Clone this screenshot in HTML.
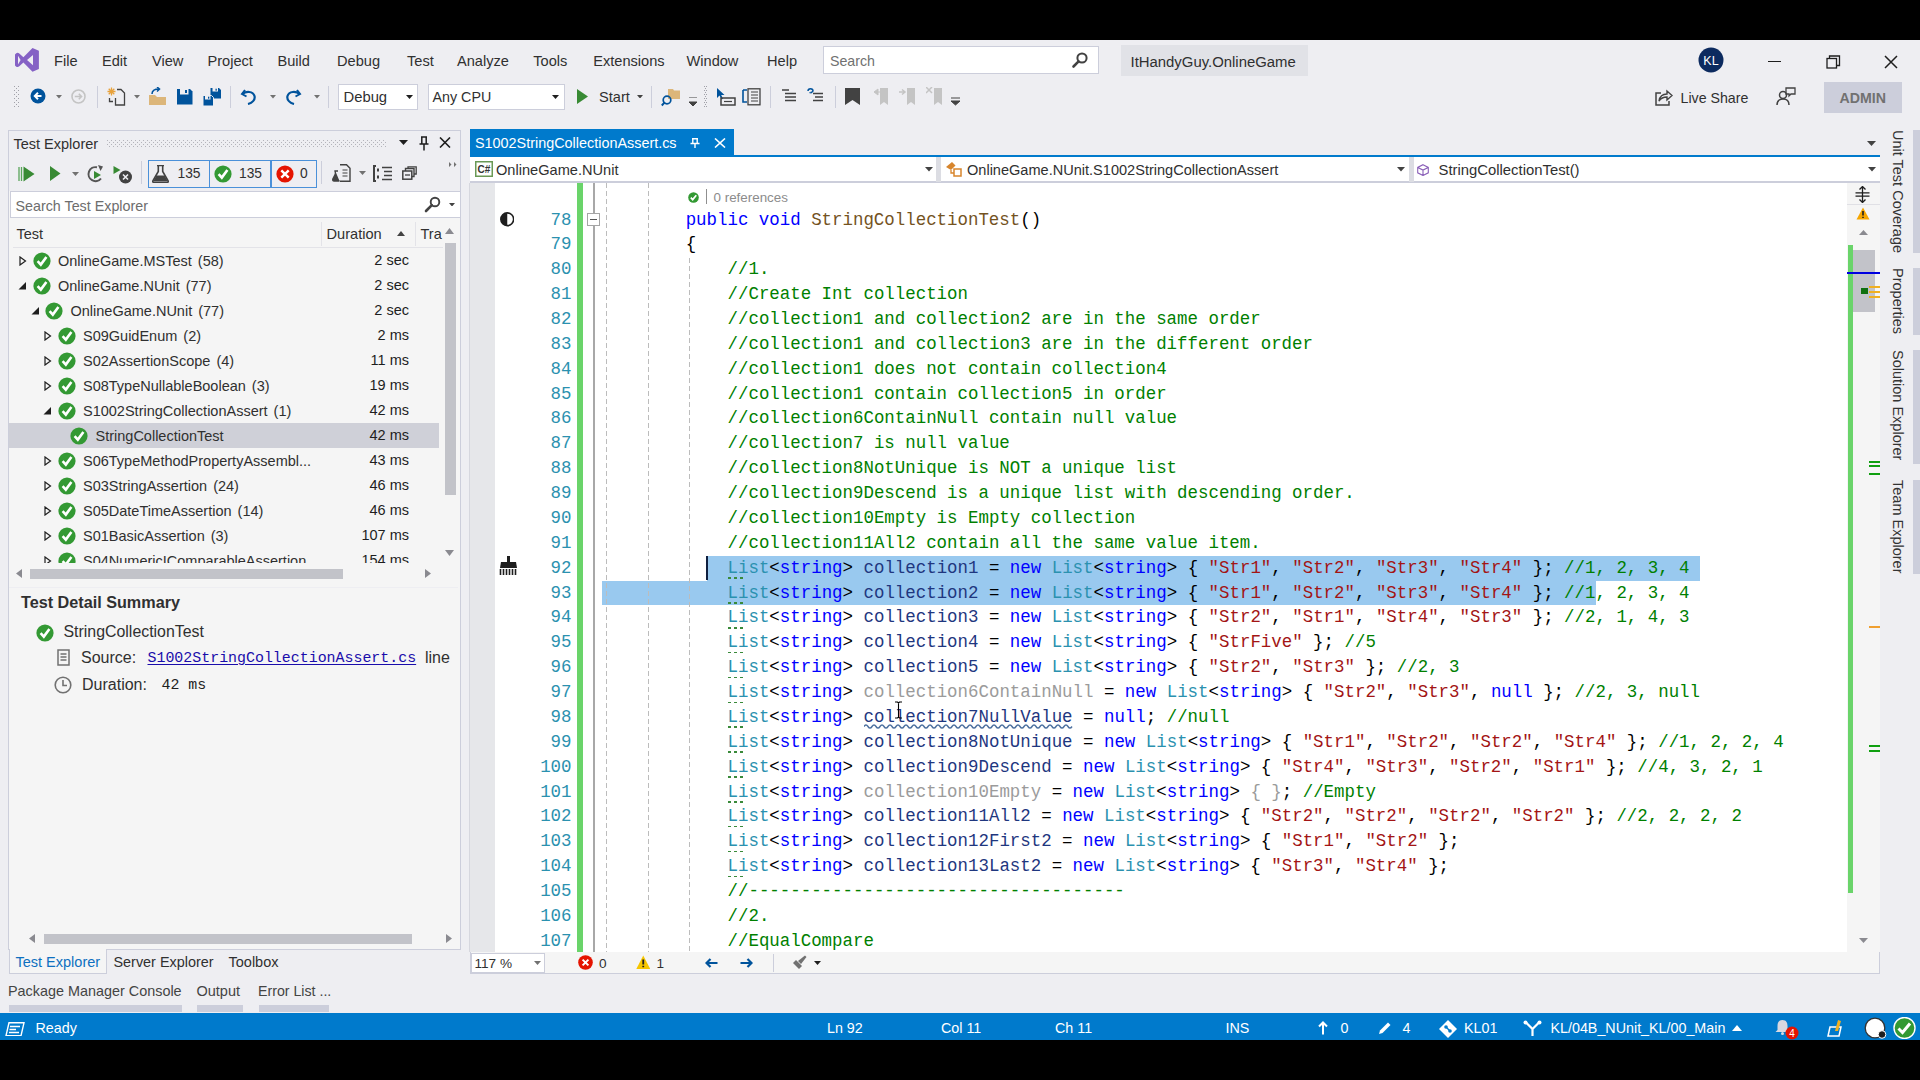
<!DOCTYPE html><html><head><meta charset="utf-8"><style>
html,body{margin:0;padding:0}
body{width:1920px;height:1080px;background:#000;overflow:hidden;position:relative;font-family:"Liberation Sans",sans-serif}
.a{position:absolute}
.t{position:absolute;white-space:nowrap;line-height:1}
.code{position:absolute;white-space:pre;font-family:"Liberation Mono",monospace;font-size:17.43px;line-height:24.87px;height:24.87px}
.k{color:#0000ff}.ty{color:#2b91af}.s{color:#a31515}.c{color:#008000}.v{color:#1f377f}.m{color:#74531f}.p{color:#000}.u{color:#9b9b9b}
</style></head><body>
<div class="a" style="left:0.00px;top:40.00px;width:1920.00px;height:1000.00px;background:#eeeef2;"></div>
<svg class="a" style="left:15.00px;top:48.00px;" width="24" height="24" viewBox="0 0 24 24"><path d="M17.5 0 L23.9 2.8 V20.9 L17.5 23.8 L8.4 14.6 L4.3 18.3 Q2.6 19.6 1 18.4 L0 17.4 V6.4 L1 5.4 Q2.6 4.2 4.3 5.5 L8.4 9.3 Z M18 7.1 V17.2 L12 12.1 Z M3 7.7 V16.4 L5.6 12 Z" fill="#8561c5" fill-rule="evenodd"/></svg>
<div class="t" style="left:54.00px;top:54.09px;font-size:14.60px;color:#303030;font-weight:normal;">File</div>
<div class="t" style="left:102.00px;top:54.09px;font-size:14.60px;color:#303030;font-weight:normal;">Edit</div>
<div class="t" style="left:152.00px;top:54.09px;font-size:14.60px;color:#303030;font-weight:normal;">View</div>
<div class="t" style="left:207.50px;top:54.09px;font-size:14.60px;color:#303030;font-weight:normal;">Project</div>
<div class="t" style="left:277.50px;top:54.09px;font-size:14.60px;color:#303030;font-weight:normal;">Build</div>
<div class="t" style="left:337.00px;top:54.09px;font-size:14.60px;color:#303030;font-weight:normal;">Debug</div>
<div class="t" style="left:407.00px;top:54.09px;font-size:14.60px;color:#303030;font-weight:normal;">Test</div>
<div class="t" style="left:457.00px;top:54.09px;font-size:14.60px;color:#303030;font-weight:normal;">Analyze</div>
<div class="t" style="left:533.25px;top:54.09px;font-size:14.60px;color:#303030;font-weight:normal;">Tools</div>
<div class="t" style="left:593.25px;top:54.09px;font-size:14.60px;color:#303030;font-weight:normal;">Extensions</div>
<div class="t" style="left:686.50px;top:54.09px;font-size:14.60px;color:#303030;font-weight:normal;">Window</div>
<div class="t" style="left:767.00px;top:54.09px;font-size:14.60px;color:#303030;font-weight:normal;">Help</div>
<div class="a" style="left:823.00px;top:46.00px;width:276.00px;height:28.00px;background:#ffffff;box-sizing:border-box;border:1px solid #cccedb"></div>
<div class="t" style="left:830.00px;top:54.15px;font-size:14.20px;color:#717171;font-weight:normal;">Search</div>
<svg class="a" style="left:1071.00px;top:51.00px;" width="18" height="18" viewBox="0 0 18 18"><circle cx="11" cy="7" r="4.6" fill="none" stroke="#424242" stroke-width="2"/><path d="M7.6 10.4 L2.5 15.5" stroke="#424242" stroke-width="2.6" stroke-linecap="round"/></svg>
<div class="a" style="left:1121.00px;top:45.00px;width:187.00px;height:31.00px;background:#e1e2e7;"></div>
<div class="t" style="left:1130.50px;top:55.04px;font-size:14.90px;color:#303030;font-weight:normal;">ItHandyGuy.OnlineGame</div>
<svg class="a" style="left:1698.00px;top:47.00px;" width="26" height="26" viewBox="0 0 26 26"><circle cx="13" cy="13" r="12.5" fill="#0c2a5f"/><text x="13" y="17.6" font-family="Liberation Sans" font-size="12.5" fill="#fff" text-anchor="middle">KL</text></svg>
<div class="a" style="left:1768.00px;top:60.50px;width:13.00px;height:1.10px;background:#1e1e1e;"></div>
<svg class="a" style="left:1826.00px;top:55.00px;" width="15" height="15" viewBox="0 0 15 15"><rect x="1" y="3.5" width="9.5" height="9.5" fill="none" stroke="#1e1e1e" stroke-width="1.3"/><path d="M3.5 3.5 V1 H13.5 V10.5 H10.5" fill="none" stroke="#1e1e1e" stroke-width="1.3"/></svg>
<svg class="a" style="left:1884.00px;top:55.00px;" width="14" height="14" viewBox="0 0 14 14"><path d="M1 1 L13 13 M13 1 L1 13" stroke="#1e1e1e" stroke-width="1.5"/></svg>
<svg class="a" style="left:13.00px;top:86.00px;" width="8" height="22" viewBox="0 0 8 22"><rect x="1" y="0" width="1" height="1" fill="#a0a0a8"/><rect x="5" y="0" width="1" height="1" fill="#a0a0a8"/><rect x="3" y="2" width="1" height="1" fill="#a0a0a8"/><rect x="1" y="4" width="1" height="1" fill="#a0a0a8"/><rect x="5" y="4" width="1" height="1" fill="#a0a0a8"/><rect x="3" y="6" width="1" height="1" fill="#a0a0a8"/><rect x="1" y="8" width="1" height="1" fill="#a0a0a8"/><rect x="5" y="8" width="1" height="1" fill="#a0a0a8"/><rect x="3" y="10" width="1" height="1" fill="#a0a0a8"/><rect x="1" y="12" width="1" height="1" fill="#a0a0a8"/><rect x="5" y="12" width="1" height="1" fill="#a0a0a8"/><rect x="3" y="14" width="1" height="1" fill="#a0a0a8"/><rect x="1" y="16" width="1" height="1" fill="#a0a0a8"/><rect x="5" y="16" width="1" height="1" fill="#a0a0a8"/><rect x="3" y="18" width="1" height="1" fill="#a0a0a8"/><rect x="1" y="20" width="1" height="1" fill="#a0a0a8"/><rect x="5" y="20" width="1" height="1" fill="#a0a0a8"/></svg>
<svg class="a" style="left:30.00px;top:88.00px;" width="16" height="16" viewBox="0 0 16 16"><circle cx="8" cy="8" r="7.5" fill="#00539c"/><path d="M11.5 8 H5 M8 4.8 L4.8 8 L8 11.2" stroke="#fff" stroke-width="2" fill="none"/></svg>
<svg class="a" style="left:55.50px;top:95.25px;" width="6" height="3.5" viewBox="0 0 6 3.5"><path d="M0 0H6 L3.0 3.5 Z" fill="#717171"/></svg>
<svg class="a" style="left:71.00px;top:89.00px;" width="15" height="15" viewBox="0 0 15 15"><circle cx="7.5" cy="7.5" r="6.5" fill="none" stroke="#c4c4c4" stroke-width="1.6"/><path d="M3.8 7.5 H10.5 M7.8 4.8 L10.5 7.5 L7.8 10.2" stroke="#c4c4c4" stroke-width="1.6" fill="none"/></svg>
<div class="a" style="left:97.00px;top:86.00px;width:1.00px;height:22.00px;background:#cccedb;"></div>
<svg class="a" style="left:107.00px;top:87.00px;" width="19" height="19" viewBox="0 0 19 19"><path d="M4.5 0.5 V8.5 M0.5 4.5 H8.5 M1.7 1.7 L7.3 7.3 M7.3 1.7 L1.7 7.3" stroke="#e8a23c" stroke-width="1.3"/><path d="M10 2.5 H14 L17.5 6 V18 H8.5 V11" fill="none" stroke="#424242" stroke-width="1.3"/><path d="M2.5 11 V14.5 H6" stroke="#424242" stroke-width="1.3" fill="none"/></svg>
<svg class="a" style="left:134.00px;top:95.25px;" width="6" height="3.5" viewBox="0 0 6 3.5"><path d="M0 0H6 L3.0 3.5 Z" fill="#717171"/></svg>
<svg class="a" style="left:148.00px;top:87.00px;" width="19" height="19" viewBox="0 0 19 19"><path d="M1 8 H7 L9 10 H18 V18 H1 Z" fill="#dcb67a"/><path d="M4 7 C4 3 7 2 11 2 M9 0 L11.5 2 L9 4.5" stroke="#00539c" stroke-width="1.5" fill="none"/></svg>
<svg class="a" style="left:177.00px;top:88.50px;" width="16" height="16" viewBox="0 0 16 16"><path d="M0 0 H13 L15.5 2.5 V15.5 H0 Z" fill="#00539c"/><rect x="3" y="0" width="8.5" height="5.5" fill="#eeeef2"/><rect x="8" y="1" width="2" height="3" fill="#00539c"/></svg>
<svg class="a" style="left:203.00px;top:87.50px;" width="18" height="18" viewBox="0 0 18 18"><path d="M7.5 0 H16 L18 2 V10.5 H7.5 Z" fill="#00539c"/><rect x="9.5" y="0" width="5.5" height="3.5" fill="#eeeef2"/><rect x="12.5" y="0.7" width="1.3" height="2" fill="#00539c"/><path d="M0 7.5 H8.5 L10.5 9.5 V18 H0 Z" fill="#00539c" stroke="#eeeef2" stroke-width="1"/><rect x="2" y="8" width="5.5" height="3.5" fill="#eeeef2"/><rect x="5" y="8.7" width="1.3" height="2" fill="#00539c"/></svg>
<div class="a" style="left:230.00px;top:86.00px;width:1.00px;height:22.00px;background:#cccedb;"></div>
<svg class="a" style="left:240.00px;top:88.00px;" width="18" height="17" viewBox="0 0 18 17"><path d="M5 2 L2 6 L6.5 8.5" stroke="#00539c" stroke-width="2" fill="none"/><path d="M2.5 6 C6 3 13 3 14.5 8 C15.5 12 12 15 8 16" stroke="#00539c" stroke-width="2.2" fill="none"/></svg>
<svg class="a" style="left:269.50px;top:95.25px;" width="6" height="3.5" viewBox="0 0 6 3.5"><path d="M0 0H6 L3.0 3.5 Z" fill="#717171"/></svg>
<svg class="a" style="left:284.00px;top:88.00px;" width="18" height="17" viewBox="0 0 18 17"><path d="M13 2 L16 6 L11.5 8.5" stroke="#00539c" stroke-width="2" fill="none"/><path d="M15.5 6 C12 3 5 3 3.5 8 C2.5 12 6 15 10 16" stroke="#00539c" stroke-width="2.2" fill="none"/></svg>
<svg class="a" style="left:313.50px;top:95.25px;" width="6" height="3.5" viewBox="0 0 6 3.5"><path d="M0 0H6 L3.0 3.5 Z" fill="#717171"/></svg>
<div class="a" style="left:328.00px;top:86.00px;width:1.00px;height:22.00px;background:#cccedb;"></div>
<div class="a" style="left:338.00px;top:84.00px;width:80.00px;height:26.00px;background:#ffffff;box-sizing:border-box;border:1px solid #cccedb"></div>
<div class="t" style="left:343.50px;top:90.05px;font-size:14.80px;color:#303030;font-weight:normal;">Debug</div>
<svg class="a" style="left:406.00px;top:94.50px;" width="7" height="4" viewBox="0 0 7 4"><path d="M0 0H7 L3.5 4 Z" fill="#1e1e1e"/></svg>
<div class="a" style="left:427.50px;top:84.00px;width:137.00px;height:26.00px;background:#ffffff;box-sizing:border-box;border:1px solid #cccedb"></div>
<div class="t" style="left:432.50px;top:90.13px;font-size:14.30px;color:#303030;font-weight:normal;">Any CPU</div>
<svg class="a" style="left:552.00px;top:94.50px;" width="7" height="4" viewBox="0 0 7 4"><path d="M0 0H7 L3.5 4 Z" fill="#1e1e1e"/></svg>
<svg class="a" style="left:577.00px;top:89.00px;" width="12" height="15" viewBox="0 0 12 15"><path d="M0 0 L11 7.5 L0 15 Z" fill="#388a34"/></svg>
<div class="t" style="left:599.00px;top:90.09px;font-size:14.60px;color:#303030;font-weight:normal;">Start</div>
<svg class="a" style="left:636.50px;top:94.75px;" width="6" height="3.5" viewBox="0 0 6 3.5"><path d="M0 0H6 L3.0 3.5 Z" fill="#424242"/></svg>
<div class="a" style="left:651.00px;top:86.00px;width:1.00px;height:22.00px;background:#cccedb;"></div>
<svg class="a" style="left:661.00px;top:87.00px;" width="20" height="20" viewBox="0 0 20 20"><path d="M7 2 H12 L13 3.5 H19 V12 H7 Z" fill="#dcb67a"/><circle cx="6" cy="13" r="3.8" fill="none" stroke="#00539c" stroke-width="1.7"/><path d="M3.5 15.5 L0.8 18.5" stroke="#00539c" stroke-width="1.9"/></svg>
<svg class="a" style="left:689.00px;top:97.00px;" width="8" height="10" viewBox="0 0 8 10"><path d="M0 0 H8 M0 5 H8 L4 9 Z" stroke="#424242" stroke-width="1" fill="#424242"/></svg>
<svg class="a" style="left:704.00px;top:86.00px;" width="3" height="22" viewBox="0 0 3 22"><rect x="0" y="0" width="1" height="1" fill="#a0a0a8"/><rect x="2" y="0" width="1" height="1" fill="#a0a0a8"/><rect x="1" y="2" width="1" height="1" fill="#a0a0a8"/><rect x="0" y="4" width="1" height="1" fill="#a0a0a8"/><rect x="2" y="4" width="1" height="1" fill="#a0a0a8"/><rect x="1" y="6" width="1" height="1" fill="#a0a0a8"/><rect x="0" y="8" width="1" height="1" fill="#a0a0a8"/><rect x="2" y="8" width="1" height="1" fill="#a0a0a8"/><rect x="1" y="10" width="1" height="1" fill="#a0a0a8"/><rect x="0" y="12" width="1" height="1" fill="#a0a0a8"/><rect x="2" y="12" width="1" height="1" fill="#a0a0a8"/><rect x="1" y="14" width="1" height="1" fill="#a0a0a8"/><rect x="0" y="16" width="1" height="1" fill="#a0a0a8"/><rect x="2" y="16" width="1" height="1" fill="#a0a0a8"/><rect x="1" y="18" width="1" height="1" fill="#a0a0a8"/><rect x="0" y="20" width="1" height="1" fill="#a0a0a8"/><rect x="2" y="20" width="1" height="1" fill="#a0a0a8"/></svg>
<svg class="a" style="left:716.00px;top:88.00px;" width="20" height="18" viewBox="0 0 20 18"><path d="M1 0 L1 10 L3.5 7.5 L5.5 11.5 L7 10.8 L5.2 7 L8.5 7 Z" fill="#00539c"/><rect x="5" y="10" width="14" height="7" fill="none" stroke="#424242" stroke-width="1.5"/><path d="M8 13.5 H16" stroke="#424242" stroke-width="1.2"/></svg>
<svg class="a" style="left:742.00px;top:88.00px;" width="20" height="18" viewBox="0 0 20 18"><path d="M1 2 H5 M1 2 V14 H5" stroke="#00539c" stroke-width="1.6" fill="none"/><rect x="6" y="0.8" width="12" height="16" fill="none" stroke="#424242" stroke-width="1.3"/><path d="M9 4 H16 M9 7 H16 M9 10 H16 M9 13 H16" stroke="#424242" stroke-width="1.2"/></svg>
<div class="a" style="left:770.00px;top:86.00px;width:1.00px;height:22.00px;background:#cccedb;"></div>
<svg class="a" style="left:782.00px;top:89.00px;" width="15" height="14" viewBox="0 0 15 14"><path d="M0 1 H7 M3 4.5 H14 M3 8 H14 M3 11.5 H14" stroke="#424242" stroke-width="1.6"/></svg>
<svg class="a" style="left:807.00px;top:88.00px;" width="17" height="16" viewBox="0 0 17 16"><path d="M1 3 C1 0 6 0 6 3 L4 5" stroke="#00539c" stroke-width="1.5" fill="none"/><path d="M2 5 L4 5.5 L3.5 3.5" fill="#00539c"/><path d="M6 5.5 H16 M8 9 H16 M6 12.5 H16" stroke="#424242" stroke-width="1.6"/></svg>
<div class="a" style="left:834.50px;top:86.00px;width:1.00px;height:22.00px;background:#cccedb;"></div>
<svg class="a" style="left:845.00px;top:88.00px;" width="15" height="17" viewBox="0 0 15 17"><path d="M0 0 H15 V17 L7.5 12 L0 17 Z" fill="#424242"/></svg>
<svg class="a" style="left:874.00px;top:88.00px;" width="15" height="17" viewBox="0 0 15 17"><path d="M6 0 H14 V17 L10 14 L6 17 Z" fill="#c4c4c4"/><path d="M0 4 L4 1 V7 Z M3 4 H6" fill="#c4c4c4" stroke="#c4c4c4"/></svg>
<svg class="a" style="left:899.00px;top:88.00px;" width="17" height="17" viewBox="0 0 17 17"><path d="M8 0 H16 V17 L12 14 L8 17 Z" fill="#c4c4c4"/><path d="M0 4 H5 M3 1.5 L6 4 L3 6.5" stroke="#c4c4c4" stroke-width="1.5" fill="none"/></svg>
<svg class="a" style="left:926.00px;top:87.00px;" width="17" height="18" viewBox="0 0 17 18"><path d="M8 1 H16 V18 L12 15 L8 18 Z" fill="#c4c4c4"/><path d="M0 0 L6 6 M6 0 L0 6" stroke="#c4c4c4" stroke-width="1.5"/></svg>
<svg class="a" style="left:951.00px;top:97.00px;" width="9" height="9" viewBox="0 0 9 9"><path d="M0 1 H9 M0 4 H9 L4.5 8 Z" stroke="#424242" stroke-width="1" fill="#424242"/></svg>
<svg class="a" style="left:1654.00px;top:88.00px;" width="19" height="19" viewBox="0 0 19 19"><path d="M7 5 H2 V17 H15 V13" stroke="#424242" stroke-width="1.5" fill="none"/><path d="M5 13 C6 7 10 6 13 6 V3 L18 7.5 L13 12 V9 C10 9 7 10 5 13 Z" stroke="#424242" stroke-width="1.4" fill="none"/></svg>
<div class="t" style="left:1680.50px;top:91.15px;font-size:14.20px;color:#303030;font-weight:normal;">Live Share</div>
<svg class="a" style="left:1776.00px;top:87.00px;" width="20" height="19" viewBox="0 0 20 19"><circle cx="7" cy="8" r="3.5" fill="none" stroke="#424242" stroke-width="1.5"/><path d="M1 18 C1 13 4 12 7 12 C10 12 13 13 13 18" stroke="#424242" stroke-width="1.5" fill="none"/><path d="M10 1 H19 V7 H15 L13 9 V7 H10 Z" stroke="#424242" stroke-width="1.3" fill="none"/></svg>
<div class="a" style="left:1824.00px;top:82.00px;width:78.00px;height:31.00px;background:#cccedb;"></div>
<div class="t" style="left:1839.50px;top:91.15px;font-size:14.20px;color:#717171;font-weight:bold;">ADMIN</div>
<div class="a" style="left:8.00px;top:129.50px;width:453.00px;height:820.00px;background:#f5f5f5;box-sizing:border-box;border:1px solid #cccedb"></div>
<div class="a" style="left:9.00px;top:130.50px;width:451.00px;height:60.00px;background:#eeeef2;"></div>
<div class="t" style="left:13.50px;top:137.10px;font-size:14.50px;color:#303030;font-weight:normal;">Test Explorer</div>
<svg class="a" style="left:107.00px;top:139.50px;" width="280" height="7" viewBox="0 0 280 7"><rect x="0" y="0" width="1" height="1" fill="#b4b4bb"/><rect x="0" y="4" width="1" height="1" fill="#b4b4bb"/><rect x="2" y="2" width="1" height="1" fill="#b4b4bb"/><rect x="2" y="6" width="1" height="1" fill="#b4b4bb"/><rect x="4" y="0" width="1" height="1" fill="#b4b4bb"/><rect x="4" y="4" width="1" height="1" fill="#b4b4bb"/><rect x="6" y="2" width="1" height="1" fill="#b4b4bb"/><rect x="6" y="6" width="1" height="1" fill="#b4b4bb"/><rect x="8" y="0" width="1" height="1" fill="#b4b4bb"/><rect x="8" y="4" width="1" height="1" fill="#b4b4bb"/><rect x="10" y="2" width="1" height="1" fill="#b4b4bb"/><rect x="10" y="6" width="1" height="1" fill="#b4b4bb"/><rect x="12" y="0" width="1" height="1" fill="#b4b4bb"/><rect x="12" y="4" width="1" height="1" fill="#b4b4bb"/><rect x="14" y="2" width="1" height="1" fill="#b4b4bb"/><rect x="14" y="6" width="1" height="1" fill="#b4b4bb"/><rect x="16" y="0" width="1" height="1" fill="#b4b4bb"/><rect x="16" y="4" width="1" height="1" fill="#b4b4bb"/><rect x="18" y="2" width="1" height="1" fill="#b4b4bb"/><rect x="18" y="6" width="1" height="1" fill="#b4b4bb"/><rect x="20" y="0" width="1" height="1" fill="#b4b4bb"/><rect x="20" y="4" width="1" height="1" fill="#b4b4bb"/><rect x="22" y="2" width="1" height="1" fill="#b4b4bb"/><rect x="22" y="6" width="1" height="1" fill="#b4b4bb"/><rect x="24" y="0" width="1" height="1" fill="#b4b4bb"/><rect x="24" y="4" width="1" height="1" fill="#b4b4bb"/><rect x="26" y="2" width="1" height="1" fill="#b4b4bb"/><rect x="26" y="6" width="1" height="1" fill="#b4b4bb"/><rect x="28" y="0" width="1" height="1" fill="#b4b4bb"/><rect x="28" y="4" width="1" height="1" fill="#b4b4bb"/><rect x="30" y="2" width="1" height="1" fill="#b4b4bb"/><rect x="30" y="6" width="1" height="1" fill="#b4b4bb"/><rect x="32" y="0" width="1" height="1" fill="#b4b4bb"/><rect x="32" y="4" width="1" height="1" fill="#b4b4bb"/><rect x="34" y="2" width="1" height="1" fill="#b4b4bb"/><rect x="34" y="6" width="1" height="1" fill="#b4b4bb"/><rect x="36" y="0" width="1" height="1" fill="#b4b4bb"/><rect x="36" y="4" width="1" height="1" fill="#b4b4bb"/><rect x="38" y="2" width="1" height="1" fill="#b4b4bb"/><rect x="38" y="6" width="1" height="1" fill="#b4b4bb"/><rect x="40" y="0" width="1" height="1" fill="#b4b4bb"/><rect x="40" y="4" width="1" height="1" fill="#b4b4bb"/><rect x="42" y="2" width="1" height="1" fill="#b4b4bb"/><rect x="42" y="6" width="1" height="1" fill="#b4b4bb"/><rect x="44" y="0" width="1" height="1" fill="#b4b4bb"/><rect x="44" y="4" width="1" height="1" fill="#b4b4bb"/><rect x="46" y="2" width="1" height="1" fill="#b4b4bb"/><rect x="46" y="6" width="1" height="1" fill="#b4b4bb"/><rect x="48" y="0" width="1" height="1" fill="#b4b4bb"/><rect x="48" y="4" width="1" height="1" fill="#b4b4bb"/><rect x="50" y="2" width="1" height="1" fill="#b4b4bb"/><rect x="50" y="6" width="1" height="1" fill="#b4b4bb"/><rect x="52" y="0" width="1" height="1" fill="#b4b4bb"/><rect x="52" y="4" width="1" height="1" fill="#b4b4bb"/><rect x="54" y="2" width="1" height="1" fill="#b4b4bb"/><rect x="54" y="6" width="1" height="1" fill="#b4b4bb"/><rect x="56" y="0" width="1" height="1" fill="#b4b4bb"/><rect x="56" y="4" width="1" height="1" fill="#b4b4bb"/><rect x="58" y="2" width="1" height="1" fill="#b4b4bb"/><rect x="58" y="6" width="1" height="1" fill="#b4b4bb"/><rect x="60" y="0" width="1" height="1" fill="#b4b4bb"/><rect x="60" y="4" width="1" height="1" fill="#b4b4bb"/><rect x="62" y="2" width="1" height="1" fill="#b4b4bb"/><rect x="62" y="6" width="1" height="1" fill="#b4b4bb"/><rect x="64" y="0" width="1" height="1" fill="#b4b4bb"/><rect x="64" y="4" width="1" height="1" fill="#b4b4bb"/><rect x="66" y="2" width="1" height="1" fill="#b4b4bb"/><rect x="66" y="6" width="1" height="1" fill="#b4b4bb"/><rect x="68" y="0" width="1" height="1" fill="#b4b4bb"/><rect x="68" y="4" width="1" height="1" fill="#b4b4bb"/><rect x="70" y="2" width="1" height="1" fill="#b4b4bb"/><rect x="70" y="6" width="1" height="1" fill="#b4b4bb"/><rect x="72" y="0" width="1" height="1" fill="#b4b4bb"/><rect x="72" y="4" width="1" height="1" fill="#b4b4bb"/><rect x="74" y="2" width="1" height="1" fill="#b4b4bb"/><rect x="74" y="6" width="1" height="1" fill="#b4b4bb"/><rect x="76" y="0" width="1" height="1" fill="#b4b4bb"/><rect x="76" y="4" width="1" height="1" fill="#b4b4bb"/><rect x="78" y="2" width="1" height="1" fill="#b4b4bb"/><rect x="78" y="6" width="1" height="1" fill="#b4b4bb"/><rect x="80" y="0" width="1" height="1" fill="#b4b4bb"/><rect x="80" y="4" width="1" height="1" fill="#b4b4bb"/><rect x="82" y="2" width="1" height="1" fill="#b4b4bb"/><rect x="82" y="6" width="1" height="1" fill="#b4b4bb"/><rect x="84" y="0" width="1" height="1" fill="#b4b4bb"/><rect x="84" y="4" width="1" height="1" fill="#b4b4bb"/><rect x="86" y="2" width="1" height="1" fill="#b4b4bb"/><rect x="86" y="6" width="1" height="1" fill="#b4b4bb"/><rect x="88" y="0" width="1" height="1" fill="#b4b4bb"/><rect x="88" y="4" width="1" height="1" fill="#b4b4bb"/><rect x="90" y="2" width="1" height="1" fill="#b4b4bb"/><rect x="90" y="6" width="1" height="1" fill="#b4b4bb"/><rect x="92" y="0" width="1" height="1" fill="#b4b4bb"/><rect x="92" y="4" width="1" height="1" fill="#b4b4bb"/><rect x="94" y="2" width="1" height="1" fill="#b4b4bb"/><rect x="94" y="6" width="1" height="1" fill="#b4b4bb"/><rect x="96" y="0" width="1" height="1" fill="#b4b4bb"/><rect x="96" y="4" width="1" height="1" fill="#b4b4bb"/><rect x="98" y="2" width="1" height="1" fill="#b4b4bb"/><rect x="98" y="6" width="1" height="1" fill="#b4b4bb"/><rect x="100" y="0" width="1" height="1" fill="#b4b4bb"/><rect x="100" y="4" width="1" height="1" fill="#b4b4bb"/><rect x="102" y="2" width="1" height="1" fill="#b4b4bb"/><rect x="102" y="6" width="1" height="1" fill="#b4b4bb"/><rect x="104" y="0" width="1" height="1" fill="#b4b4bb"/><rect x="104" y="4" width="1" height="1" fill="#b4b4bb"/><rect x="106" y="2" width="1" height="1" fill="#b4b4bb"/><rect x="106" y="6" width="1" height="1" fill="#b4b4bb"/><rect x="108" y="0" width="1" height="1" fill="#b4b4bb"/><rect x="108" y="4" width="1" height="1" fill="#b4b4bb"/><rect x="110" y="2" width="1" height="1" fill="#b4b4bb"/><rect x="110" y="6" width="1" height="1" fill="#b4b4bb"/><rect x="112" y="0" width="1" height="1" fill="#b4b4bb"/><rect x="112" y="4" width="1" height="1" fill="#b4b4bb"/><rect x="114" y="2" width="1" height="1" fill="#b4b4bb"/><rect x="114" y="6" width="1" height="1" fill="#b4b4bb"/><rect x="116" y="0" width="1" height="1" fill="#b4b4bb"/><rect x="116" y="4" width="1" height="1" fill="#b4b4bb"/><rect x="118" y="2" width="1" height="1" fill="#b4b4bb"/><rect x="118" y="6" width="1" height="1" fill="#b4b4bb"/><rect x="120" y="0" width="1" height="1" fill="#b4b4bb"/><rect x="120" y="4" width="1" height="1" fill="#b4b4bb"/><rect x="122" y="2" width="1" height="1" fill="#b4b4bb"/><rect x="122" y="6" width="1" height="1" fill="#b4b4bb"/><rect x="124" y="0" width="1" height="1" fill="#b4b4bb"/><rect x="124" y="4" width="1" height="1" fill="#b4b4bb"/><rect x="126" y="2" width="1" height="1" fill="#b4b4bb"/><rect x="126" y="6" width="1" height="1" fill="#b4b4bb"/><rect x="128" y="0" width="1" height="1" fill="#b4b4bb"/><rect x="128" y="4" width="1" height="1" fill="#b4b4bb"/><rect x="130" y="2" width="1" height="1" fill="#b4b4bb"/><rect x="130" y="6" width="1" height="1" fill="#b4b4bb"/><rect x="132" y="0" width="1" height="1" fill="#b4b4bb"/><rect x="132" y="4" width="1" height="1" fill="#b4b4bb"/><rect x="134" y="2" width="1" height="1" fill="#b4b4bb"/><rect x="134" y="6" width="1" height="1" fill="#b4b4bb"/><rect x="136" y="0" width="1" height="1" fill="#b4b4bb"/><rect x="136" y="4" width="1" height="1" fill="#b4b4bb"/><rect x="138" y="2" width="1" height="1" fill="#b4b4bb"/><rect x="138" y="6" width="1" height="1" fill="#b4b4bb"/><rect x="140" y="0" width="1" height="1" fill="#b4b4bb"/><rect x="140" y="4" width="1" height="1" fill="#b4b4bb"/><rect x="142" y="2" width="1" height="1" fill="#b4b4bb"/><rect x="142" y="6" width="1" height="1" fill="#b4b4bb"/><rect x="144" y="0" width="1" height="1" fill="#b4b4bb"/><rect x="144" y="4" width="1" height="1" fill="#b4b4bb"/><rect x="146" y="2" width="1" height="1" fill="#b4b4bb"/><rect x="146" y="6" width="1" height="1" fill="#b4b4bb"/><rect x="148" y="0" width="1" height="1" fill="#b4b4bb"/><rect x="148" y="4" width="1" height="1" fill="#b4b4bb"/><rect x="150" y="2" width="1" height="1" fill="#b4b4bb"/><rect x="150" y="6" width="1" height="1" fill="#b4b4bb"/><rect x="152" y="0" width="1" height="1" fill="#b4b4bb"/><rect x="152" y="4" width="1" height="1" fill="#b4b4bb"/><rect x="154" y="2" width="1" height="1" fill="#b4b4bb"/><rect x="154" y="6" width="1" height="1" fill="#b4b4bb"/><rect x="156" y="0" width="1" height="1" fill="#b4b4bb"/><rect x="156" y="4" width="1" height="1" fill="#b4b4bb"/><rect x="158" y="2" width="1" height="1" fill="#b4b4bb"/><rect x="158" y="6" width="1" height="1" fill="#b4b4bb"/><rect x="160" y="0" width="1" height="1" fill="#b4b4bb"/><rect x="160" y="4" width="1" height="1" fill="#b4b4bb"/><rect x="162" y="2" width="1" height="1" fill="#b4b4bb"/><rect x="162" y="6" width="1" height="1" fill="#b4b4bb"/><rect x="164" y="0" width="1" height="1" fill="#b4b4bb"/><rect x="164" y="4" width="1" height="1" fill="#b4b4bb"/><rect x="166" y="2" width="1" height="1" fill="#b4b4bb"/><rect x="166" y="6" width="1" height="1" fill="#b4b4bb"/><rect x="168" y="0" width="1" height="1" fill="#b4b4bb"/><rect x="168" y="4" width="1" height="1" fill="#b4b4bb"/><rect x="170" y="2" width="1" height="1" fill="#b4b4bb"/><rect x="170" y="6" width="1" height="1" fill="#b4b4bb"/><rect x="172" y="0" width="1" height="1" fill="#b4b4bb"/><rect x="172" y="4" width="1" height="1" fill="#b4b4bb"/><rect x="174" y="2" width="1" height="1" fill="#b4b4bb"/><rect x="174" y="6" width="1" height="1" fill="#b4b4bb"/><rect x="176" y="0" width="1" height="1" fill="#b4b4bb"/><rect x="176" y="4" width="1" height="1" fill="#b4b4bb"/><rect x="178" y="2" width="1" height="1" fill="#b4b4bb"/><rect x="178" y="6" width="1" height="1" fill="#b4b4bb"/><rect x="180" y="0" width="1" height="1" fill="#b4b4bb"/><rect x="180" y="4" width="1" height="1" fill="#b4b4bb"/><rect x="182" y="2" width="1" height="1" fill="#b4b4bb"/><rect x="182" y="6" width="1" height="1" fill="#b4b4bb"/><rect x="184" y="0" width="1" height="1" fill="#b4b4bb"/><rect x="184" y="4" width="1" height="1" fill="#b4b4bb"/><rect x="186" y="2" width="1" height="1" fill="#b4b4bb"/><rect x="186" y="6" width="1" height="1" fill="#b4b4bb"/><rect x="188" y="0" width="1" height="1" fill="#b4b4bb"/><rect x="188" y="4" width="1" height="1" fill="#b4b4bb"/><rect x="190" y="2" width="1" height="1" fill="#b4b4bb"/><rect x="190" y="6" width="1" height="1" fill="#b4b4bb"/><rect x="192" y="0" width="1" height="1" fill="#b4b4bb"/><rect x="192" y="4" width="1" height="1" fill="#b4b4bb"/><rect x="194" y="2" width="1" height="1" fill="#b4b4bb"/><rect x="194" y="6" width="1" height="1" fill="#b4b4bb"/><rect x="196" y="0" width="1" height="1" fill="#b4b4bb"/><rect x="196" y="4" width="1" height="1" fill="#b4b4bb"/><rect x="198" y="2" width="1" height="1" fill="#b4b4bb"/><rect x="198" y="6" width="1" height="1" fill="#b4b4bb"/><rect x="200" y="0" width="1" height="1" fill="#b4b4bb"/><rect x="200" y="4" width="1" height="1" fill="#b4b4bb"/><rect x="202" y="2" width="1" height="1" fill="#b4b4bb"/><rect x="202" y="6" width="1" height="1" fill="#b4b4bb"/><rect x="204" y="0" width="1" height="1" fill="#b4b4bb"/><rect x="204" y="4" width="1" height="1" fill="#b4b4bb"/><rect x="206" y="2" width="1" height="1" fill="#b4b4bb"/><rect x="206" y="6" width="1" height="1" fill="#b4b4bb"/><rect x="208" y="0" width="1" height="1" fill="#b4b4bb"/><rect x="208" y="4" width="1" height="1" fill="#b4b4bb"/><rect x="210" y="2" width="1" height="1" fill="#b4b4bb"/><rect x="210" y="6" width="1" height="1" fill="#b4b4bb"/><rect x="212" y="0" width="1" height="1" fill="#b4b4bb"/><rect x="212" y="4" width="1" height="1" fill="#b4b4bb"/><rect x="214" y="2" width="1" height="1" fill="#b4b4bb"/><rect x="214" y="6" width="1" height="1" fill="#b4b4bb"/><rect x="216" y="0" width="1" height="1" fill="#b4b4bb"/><rect x="216" y="4" width="1" height="1" fill="#b4b4bb"/><rect x="218" y="2" width="1" height="1" fill="#b4b4bb"/><rect x="218" y="6" width="1" height="1" fill="#b4b4bb"/><rect x="220" y="0" width="1" height="1" fill="#b4b4bb"/><rect x="220" y="4" width="1" height="1" fill="#b4b4bb"/><rect x="222" y="2" width="1" height="1" fill="#b4b4bb"/><rect x="222" y="6" width="1" height="1" fill="#b4b4bb"/><rect x="224" y="0" width="1" height="1" fill="#b4b4bb"/><rect x="224" y="4" width="1" height="1" fill="#b4b4bb"/><rect x="226" y="2" width="1" height="1" fill="#b4b4bb"/><rect x="226" y="6" width="1" height="1" fill="#b4b4bb"/><rect x="228" y="0" width="1" height="1" fill="#b4b4bb"/><rect x="228" y="4" width="1" height="1" fill="#b4b4bb"/><rect x="230" y="2" width="1" height="1" fill="#b4b4bb"/><rect x="230" y="6" width="1" height="1" fill="#b4b4bb"/><rect x="232" y="0" width="1" height="1" fill="#b4b4bb"/><rect x="232" y="4" width="1" height="1" fill="#b4b4bb"/><rect x="234" y="2" width="1" height="1" fill="#b4b4bb"/><rect x="234" y="6" width="1" height="1" fill="#b4b4bb"/><rect x="236" y="0" width="1" height="1" fill="#b4b4bb"/><rect x="236" y="4" width="1" height="1" fill="#b4b4bb"/><rect x="238" y="2" width="1" height="1" fill="#b4b4bb"/><rect x="238" y="6" width="1" height="1" fill="#b4b4bb"/><rect x="240" y="0" width="1" height="1" fill="#b4b4bb"/><rect x="240" y="4" width="1" height="1" fill="#b4b4bb"/><rect x="242" y="2" width="1" height="1" fill="#b4b4bb"/><rect x="242" y="6" width="1" height="1" fill="#b4b4bb"/><rect x="244" y="0" width="1" height="1" fill="#b4b4bb"/><rect x="244" y="4" width="1" height="1" fill="#b4b4bb"/><rect x="246" y="2" width="1" height="1" fill="#b4b4bb"/><rect x="246" y="6" width="1" height="1" fill="#b4b4bb"/><rect x="248" y="0" width="1" height="1" fill="#b4b4bb"/><rect x="248" y="4" width="1" height="1" fill="#b4b4bb"/><rect x="250" y="2" width="1" height="1" fill="#b4b4bb"/><rect x="250" y="6" width="1" height="1" fill="#b4b4bb"/><rect x="252" y="0" width="1" height="1" fill="#b4b4bb"/><rect x="252" y="4" width="1" height="1" fill="#b4b4bb"/><rect x="254" y="2" width="1" height="1" fill="#b4b4bb"/><rect x="254" y="6" width="1" height="1" fill="#b4b4bb"/><rect x="256" y="0" width="1" height="1" fill="#b4b4bb"/><rect x="256" y="4" width="1" height="1" fill="#b4b4bb"/><rect x="258" y="2" width="1" height="1" fill="#b4b4bb"/><rect x="258" y="6" width="1" height="1" fill="#b4b4bb"/><rect x="260" y="0" width="1" height="1" fill="#b4b4bb"/><rect x="260" y="4" width="1" height="1" fill="#b4b4bb"/><rect x="262" y="2" width="1" height="1" fill="#b4b4bb"/><rect x="262" y="6" width="1" height="1" fill="#b4b4bb"/><rect x="264" y="0" width="1" height="1" fill="#b4b4bb"/><rect x="264" y="4" width="1" height="1" fill="#b4b4bb"/><rect x="266" y="2" width="1" height="1" fill="#b4b4bb"/><rect x="266" y="6" width="1" height="1" fill="#b4b4bb"/><rect x="268" y="0" width="1" height="1" fill="#b4b4bb"/><rect x="268" y="4" width="1" height="1" fill="#b4b4bb"/><rect x="270" y="2" width="1" height="1" fill="#b4b4bb"/><rect x="270" y="6" width="1" height="1" fill="#b4b4bb"/><rect x="272" y="0" width="1" height="1" fill="#b4b4bb"/><rect x="272" y="4" width="1" height="1" fill="#b4b4bb"/><rect x="274" y="2" width="1" height="1" fill="#b4b4bb"/><rect x="274" y="6" width="1" height="1" fill="#b4b4bb"/><rect x="276" y="0" width="1" height="1" fill="#b4b4bb"/><rect x="276" y="4" width="1" height="1" fill="#b4b4bb"/><rect x="278" y="2" width="1" height="1" fill="#b4b4bb"/><rect x="278" y="6" width="1" height="1" fill="#b4b4bb"/></svg>
<svg class="a" style="left:398.50px;top:140.00px;" width="9" height="5" viewBox="0 0 9 5"><path d="M0 0H9 L4.5 5 Z" fill="#1e1e1e"/></svg>
<svg class="a" style="left:418.00px;top:136.00px;" width="11" height="15" viewBox="0 0 11 15"><path d="M3 1 H9 M3.8 1 V8 M8.2 1 V8 M1.5 8 H10.5 M6 8 V14.5" stroke="#1e1e1e" stroke-width="1.5" fill="none"/></svg>
<svg class="a" style="left:439.00px;top:137.00px;" width="12" height="11" viewBox="0 0 12 11"><path d="M1 0.5 L11 10.5 M11 0.5 L1 10.5" stroke="#1e1e1e" stroke-width="1.6"/></svg>
<svg class="a" style="left:18.00px;top:166.00px;" width="17" height="16" viewBox="0 0 17 16"><path d="M1 1 V15 M3.5 1 V15" stroke="#5aa55a" stroke-width="1.3"/><path d="M5.5 0.5 L16.5 8 L5.5 15.5 Z" fill="#388a34"/></svg>
<svg class="a" style="left:49.50px;top:165.50px;" width="11" height="15" viewBox="0 0 11 15"><path d="M0 0 L10.5 7.5 L0 15 Z" fill="#388a34"/></svg>
<svg class="a" style="left:72.00px;top:171.50px;" width="7" height="4" viewBox="0 0 7 4"><path d="M0 0H7 L3.5 4 Z" fill="#717171"/></svg>
<svg class="a" style="left:86.00px;top:165.00px;" width="19" height="18" viewBox="0 0 19 18"><path d="M11 2.3 A7 7 0 1 0 15 13.5" stroke="#555" stroke-width="2" fill="none"/><path d="M12 0 L17 1.5 L14.5 6 Z" fill="#555"/><path d="M8 6 L15 10 L8 14 Z" fill="#388a34"/></svg>
<svg class="a" style="left:113.00px;top:165.00px;" width="20" height="19" viewBox="0 0 20 19"><path d="M0.5 1 L7.5 5 L0.5 9 Z" fill="#388a34"/><circle cx="12.5" cy="12" r="6.5" fill="#424242"/><path d="M10 9.5 L15 14.5 M15 9.5 L10 14.5" stroke="#eeeef2" stroke-width="1.6"/></svg>
<div class="a" style="left:141.00px;top:160.50px;width:1.00px;height:23.00px;background:#cccedb;"></div>
<div class="a" style="left:147.50px;top:159.50px;width:169.50px;height:28.00px;background:#eeeef2;box-sizing:border-box;border:1px solid #4a90d9"></div>
<div class="a" style="left:208.50px;top:159.50px;width:1.50px;height:28.00px;background:#4a90d9;"></div>
<div class="a" style="left:270.00px;top:159.50px;width:1.50px;height:28.00px;background:#4a90d9;"></div>
<svg class="a" style="left:151.50px;top:164.50px;" width="17" height="18" viewBox="0 0 17 18"><path d="M5 0.5 H12 M6.3 1 V6.5 L1 15.5 C0.3 17 1 17.5 2.5 17.5 H14.5 C16 17.5 16.7 17 16 15.5 L10.7 6.5 V1" fill="none" stroke="#424242" stroke-width="1.6"/><path d="M4.5 10.5 H12.5 L16 16.5 H1 Z" fill="#424242"/></svg>
<div class="t" style="left:177.50px;top:167.21px;font-size:13.80px;color:#303030;font-weight:normal;">135</div>
<svg class="a" style="left:213.50px;top:165.00px;" width="18" height="18" viewBox="0 0 18 18"><circle cx="9" cy="9" r="8.6" fill="#339933"/><path d="M4.6 9.2 L7.8 12.6 L13.4 5" stroke="#fff" stroke-width="2.6" fill="none"/></svg>
<div class="t" style="left:239.00px;top:167.21px;font-size:13.80px;color:#303030;font-weight:normal;">135</div>
<svg class="a" style="left:275.50px;top:165.00px;" width="18" height="18" viewBox="0 0 18 18"><circle cx="9" cy="9" r="8.6" fill="#e51400"/><path d="M5.3 5.3 L12.7 12.7 M12.7 5.3 L5.3 12.7" stroke="#fff" stroke-width="2.4"/></svg>
<div class="t" style="left:300.00px;top:167.21px;font-size:13.80px;color:#303030;font-weight:normal;">0</div>
<div class="a" style="left:321.00px;top:160.50px;width:1.00px;height:23.00px;background:#cccedb;"></div>
<svg class="a" style="left:332.00px;top:164.00px;" width="19" height="18" viewBox="0 0 19 18"><path d="M8 0.8 H14.5 L18 4.3 V17.3 H8" fill="none" stroke="#424242" stroke-width="1.4"/><path d="M10.5 6 H15.5 M10.5 9 H15.5 M10.5 12 H15.5" stroke="#424242" stroke-width="1.2"/><path d="M2.3 7 H6 M3.3 7 V10 L0.8 15 C0.5 16.5 1 17 2 17 H7.5" fill="#424242" stroke="#424242" stroke-width="1.3"/></svg>
<svg class="a" style="left:358.50px;top:171.00px;" width="7" height="4" viewBox="0 0 7 4"><path d="M0 0H7 L3.5 4 Z" fill="#717171"/></svg>
<svg class="a" style="left:372.50px;top:165.00px;" width="20" height="17" viewBox="0 0 20 17"><path d="M3 1 H1 V16 H3" stroke="#424242" stroke-width="2" fill="none"/><path d="M5 3.5 V6.5 M5 10.5 V13.5" stroke="#424242" stroke-width="2"/><path d="M9 2.5 H19 M11 6.5 H19 M11 10.5 H19 M9 14.5 H19" stroke="#424242" stroke-width="1.6"/></svg>
<svg class="a" style="left:402.00px;top:166.00px;" width="15" height="14" viewBox="0 0 15 14"><rect x="0.8" y="5" width="9" height="8.2" fill="none" stroke="#424242" stroke-width="1.5"/><path d="M3.5 5 V2.5 H12 V10.5 H9.8" fill="none" stroke="#424242" stroke-width="1.4"/><path d="M6 2.5 V0.8 H14.2 V8 H12" fill="none" stroke="#424242" stroke-width="1.3"/><path d="M3 9 H8" stroke="#424242" stroke-width="1.3"/></svg>
<svg class="a" style="left:449.00px;top:162.00px;" width="9" height="5" viewBox="0 0 9 5"><path d="M0 0 L2.5 2.5 L0 5 Z M5 0 L7.5 2.5 L5 5 Z" fill="#717171"/></svg>
<div class="a" style="left:9.50px;top:191.00px;width:450.00px;height:27.00px;background:#ffffff;box-sizing:border-box;border:1px solid #cccedb;border-right:none"></div>
<div class="t" style="left:15.50px;top:198.63px;font-size:14.30px;color:#6d6d6d;font-weight:normal;">Search Test Explorer</div>
<svg class="a" style="left:424.00px;top:196.00px;" width="17" height="17" viewBox="0 0 17 17"><circle cx="11" cy="6" r="4.3" fill="none" stroke="#424242" stroke-width="1.9"/><path d="M7.8 9.2 L2 15" stroke="#424242" stroke-width="2.6" stroke-linecap="round"/></svg>
<svg class="a" style="left:448.50px;top:202.75px;" width="6" height="3.5" viewBox="0 0 6 3.5"><path d="M0 0H6 L3.0 3.5 Z" fill="#424242"/></svg>
<div class="a" style="left:9.00px;top:218.00px;width:449.00px;height:30.00px;background:#f5f5f5;"></div>
<div class="a" style="left:12.50px;top:247.00px;width:430.00px;height:1.00px;background:#e3e3e8;"></div>
<div class="t" style="left:16.50px;top:227.10px;font-size:14.50px;color:#303030;font-weight:normal;">Test</div>
<div class="a" style="left:321.00px;top:222.00px;width:1.00px;height:24.00px;background:#e3e3e8;"></div>
<div class="t" style="left:326.50px;top:227.09px;font-size:14.60px;color:#303030;font-weight:normal;">Duration</div>
<svg class="a" style="left:396.50px;top:231.00px;" width="8" height="5" viewBox="0 0 8 5"><path d="M0 5 L4 0 L8 5 Z" fill="#424242"/></svg>
<div class="a" style="left:415.00px;top:222.00px;width:1.00px;height:24.00px;background:#e3e3e8;"></div>
<div class="t" style="left:420.50px;top:227.10px;font-size:14.50px;color:#303030;font-weight:normal;">Tra</div>
<svg class="a" style="left:445.00px;top:228.00px;" width="9" height="6" viewBox="0 0 9 6"><path d="M0 6 L4.5 0 L9 6 Z" fill="#8a8a90"/></svg>
<div class="a" style="left:444.50px;top:242.50px;width:11.00px;height:252.00px;background:#c2c3c9;"></div>
<svg class="a" style="left:445.00px;top:549.50px;" width="9" height="6" viewBox="0 0 9 6"><path d="M0 0 L4.5 6 L9 0 Z" fill="#8a8a90"/></svg>
<div class="a" style="left:9px;top:248px;width:435px;height:314.5px;overflow:hidden">
<svg class="a" style="left:10.00px;top:7.75px;" width="8" height="10" viewBox="0 0 8 10"><path d="M1 1 L6.5 5 L1 9 Z" fill="none" stroke="#1e1e1e" stroke-width="1.2"/></svg>
<svg class="a" style="left:23.50px;top:3.75px;" width="18" height="18" viewBox="0 0 18 18"><circle cx="9" cy="9" r="8.6" fill="#339933"/><path d="M4.6 9.2 L7.8 12.6 L13.4 5" stroke="#fff" stroke-width="2.6" fill="none"/></svg>
<div class="t" style="left:49.00px;top:5.85px;font-size:14.50px;color:#303030;font-weight:normal;word-spacing:2px">OnlineGame.MSTest (58)</div>
<div class="t" style="right:35px;top:4.95px;font-size:14.5px;color:#1e1e1e">2 sec</div>
<svg class="a" style="left:9.00px;top:33.75px;" width="9" height="8" viewBox="0 0 9 8"><path d="M8 0 V7.5 H0.5 Z" fill="#1e1e1e"/></svg>
<svg class="a" style="left:23.50px;top:28.75px;" width="18" height="18" viewBox="0 0 18 18"><circle cx="9" cy="9" r="8.6" fill="#339933"/><path d="M4.6 9.2 L7.8 12.6 L13.4 5" stroke="#fff" stroke-width="2.6" fill="none"/></svg>
<div class="t" style="left:49.00px;top:30.85px;font-size:14.50px;color:#303030;font-weight:normal;word-spacing:2px">OnlineGame.NUnit (77)</div>
<div class="t" style="right:35px;top:29.95px;font-size:14.5px;color:#1e1e1e">2 sec</div>
<svg class="a" style="left:21.50px;top:58.75px;" width="9" height="8" viewBox="0 0 9 8"><path d="M8 0 V7.5 H0.5 Z" fill="#1e1e1e"/></svg>
<svg class="a" style="left:36.00px;top:53.75px;" width="18" height="18" viewBox="0 0 18 18"><circle cx="9" cy="9" r="8.6" fill="#339933"/><path d="M4.6 9.2 L7.8 12.6 L13.4 5" stroke="#fff" stroke-width="2.6" fill="none"/></svg>
<div class="t" style="left:61.50px;top:55.85px;font-size:14.50px;color:#303030;font-weight:normal;word-spacing:2px">OnlineGame.NUnit (77)</div>
<div class="t" style="right:35px;top:54.95px;font-size:14.5px;color:#1e1e1e">2 sec</div>
<svg class="a" style="left:35.00px;top:82.75px;" width="8" height="10" viewBox="0 0 8 10"><path d="M1 1 L6.5 5 L1 9 Z" fill="none" stroke="#1e1e1e" stroke-width="1.2"/></svg>
<svg class="a" style="left:48.50px;top:78.75px;" width="18" height="18" viewBox="0 0 18 18"><circle cx="9" cy="9" r="8.6" fill="#339933"/><path d="M4.6 9.2 L7.8 12.6 L13.4 5" stroke="#fff" stroke-width="2.6" fill="none"/></svg>
<div class="t" style="left:74.00px;top:80.85px;font-size:14.50px;color:#303030;font-weight:normal;word-spacing:2px">S09GuidEnum (2)</div>
<div class="t" style="right:35px;top:79.95px;font-size:14.5px;color:#1e1e1e">2 ms</div>
<svg class="a" style="left:35.00px;top:107.75px;" width="8" height="10" viewBox="0 0 8 10"><path d="M1 1 L6.5 5 L1 9 Z" fill="none" stroke="#1e1e1e" stroke-width="1.2"/></svg>
<svg class="a" style="left:48.50px;top:103.75px;" width="18" height="18" viewBox="0 0 18 18"><circle cx="9" cy="9" r="8.6" fill="#339933"/><path d="M4.6 9.2 L7.8 12.6 L13.4 5" stroke="#fff" stroke-width="2.6" fill="none"/></svg>
<div class="t" style="left:74.00px;top:105.85px;font-size:14.50px;color:#303030;font-weight:normal;word-spacing:2px">S02AssertionScope (4)</div>
<div class="t" style="right:35px;top:104.95px;font-size:14.5px;color:#1e1e1e">11 ms</div>
<svg class="a" style="left:35.00px;top:132.75px;" width="8" height="10" viewBox="0 0 8 10"><path d="M1 1 L6.5 5 L1 9 Z" fill="none" stroke="#1e1e1e" stroke-width="1.2"/></svg>
<svg class="a" style="left:48.50px;top:128.75px;" width="18" height="18" viewBox="0 0 18 18"><circle cx="9" cy="9" r="8.6" fill="#339933"/><path d="M4.6 9.2 L7.8 12.6 L13.4 5" stroke="#fff" stroke-width="2.6" fill="none"/></svg>
<div class="t" style="left:74.00px;top:130.85px;font-size:14.50px;color:#303030;font-weight:normal;word-spacing:2px">S08TypeNullableBoolean (3)</div>
<div class="t" style="right:35px;top:129.95px;font-size:14.5px;color:#1e1e1e">19 ms</div>
<svg class="a" style="left:34.00px;top:158.75px;" width="9" height="8" viewBox="0 0 9 8"><path d="M8 0 V7.5 H0.5 Z" fill="#1e1e1e"/></svg>
<svg class="a" style="left:48.50px;top:153.75px;" width="18" height="18" viewBox="0 0 18 18"><circle cx="9" cy="9" r="8.6" fill="#339933"/><path d="M4.6 9.2 L7.8 12.6 L13.4 5" stroke="#fff" stroke-width="2.6" fill="none"/></svg>
<div class="t" style="left:74.00px;top:155.85px;font-size:14.50px;color:#303030;font-weight:normal;word-spacing:2px">S1002StringCollectionAssert (1)</div>
<div class="t" style="right:35px;top:154.95px;font-size:14.5px;color:#1e1e1e">42 ms</div>
<div class="a" style="left:0.00px;top:175.25px;width:430.00px;height:25.00px;background:#cfd0d8;"></div>
<svg class="a" style="left:61.00px;top:178.75px;" width="18" height="18" viewBox="0 0 18 18"><circle cx="9" cy="9" r="8.6" fill="#339933"/><path d="M4.6 9.2 L7.8 12.6 L13.4 5" stroke="#fff" stroke-width="2.6" fill="none"/></svg>
<div class="t" style="left:86.50px;top:180.85px;font-size:14.50px;color:#303030;font-weight:normal;word-spacing:2px">StringCollectionTest</div>
<div class="t" style="right:35px;top:179.95px;font-size:14.5px;color:#1e1e1e">42 ms</div>
<svg class="a" style="left:35.00px;top:207.75px;" width="8" height="10" viewBox="0 0 8 10"><path d="M1 1 L6.5 5 L1 9 Z" fill="none" stroke="#1e1e1e" stroke-width="1.2"/></svg>
<svg class="a" style="left:48.50px;top:203.75px;" width="18" height="18" viewBox="0 0 18 18"><circle cx="9" cy="9" r="8.6" fill="#339933"/><path d="M4.6 9.2 L7.8 12.6 L13.4 5" stroke="#fff" stroke-width="2.6" fill="none"/></svg>
<div class="t" style="left:74.00px;top:205.85px;font-size:14.50px;color:#303030;font-weight:normal;word-spacing:2px">S06TypeMethodPropertyAssembl...</div>
<div class="t" style="right:35px;top:204.95px;font-size:14.5px;color:#1e1e1e">43 ms</div>
<svg class="a" style="left:35.00px;top:232.75px;" width="8" height="10" viewBox="0 0 8 10"><path d="M1 1 L6.5 5 L1 9 Z" fill="none" stroke="#1e1e1e" stroke-width="1.2"/></svg>
<svg class="a" style="left:48.50px;top:228.75px;" width="18" height="18" viewBox="0 0 18 18"><circle cx="9" cy="9" r="8.6" fill="#339933"/><path d="M4.6 9.2 L7.8 12.6 L13.4 5" stroke="#fff" stroke-width="2.6" fill="none"/></svg>
<div class="t" style="left:74.00px;top:230.85px;font-size:14.50px;color:#303030;font-weight:normal;word-spacing:2px">S03StringAssertion (24)</div>
<div class="t" style="right:35px;top:229.95px;font-size:14.5px;color:#1e1e1e">46 ms</div>
<svg class="a" style="left:35.00px;top:257.75px;" width="8" height="10" viewBox="0 0 8 10"><path d="M1 1 L6.5 5 L1 9 Z" fill="none" stroke="#1e1e1e" stroke-width="1.2"/></svg>
<svg class="a" style="left:48.50px;top:253.75px;" width="18" height="18" viewBox="0 0 18 18"><circle cx="9" cy="9" r="8.6" fill="#339933"/><path d="M4.6 9.2 L7.8 12.6 L13.4 5" stroke="#fff" stroke-width="2.6" fill="none"/></svg>
<div class="t" style="left:74.00px;top:255.85px;font-size:14.50px;color:#303030;font-weight:normal;word-spacing:2px">S05DateTimeAssertion (14)</div>
<div class="t" style="right:35px;top:254.95px;font-size:14.5px;color:#1e1e1e">46 ms</div>
<svg class="a" style="left:35.00px;top:282.75px;" width="8" height="10" viewBox="0 0 8 10"><path d="M1 1 L6.5 5 L1 9 Z" fill="none" stroke="#1e1e1e" stroke-width="1.2"/></svg>
<svg class="a" style="left:48.50px;top:278.75px;" width="18" height="18" viewBox="0 0 18 18"><circle cx="9" cy="9" r="8.6" fill="#339933"/><path d="M4.6 9.2 L7.8 12.6 L13.4 5" stroke="#fff" stroke-width="2.6" fill="none"/></svg>
<div class="t" style="left:74.00px;top:280.85px;font-size:14.50px;color:#303030;font-weight:normal;word-spacing:2px">S01BasicAssertion (3)</div>
<div class="t" style="right:35px;top:279.95px;font-size:14.5px;color:#1e1e1e">107 ms</div>
<svg class="a" style="left:35.00px;top:307.75px;" width="8" height="10" viewBox="0 0 8 10"><path d="M1 1 L6.5 5 L1 9 Z" fill="none" stroke="#1e1e1e" stroke-width="1.2"/></svg>
<svg class="a" style="left:48.50px;top:303.75px;" width="18" height="18" viewBox="0 0 18 18"><circle cx="9" cy="9" r="8.6" fill="#339933"/><path d="M4.6 9.2 L7.8 12.6 L13.4 5" stroke="#fff" stroke-width="2.6" fill="none"/></svg>
<div class="t" style="left:74.00px;top:305.85px;font-size:14.50px;color:#303030;font-weight:normal;word-spacing:2px">S04NumericIComparableAssertion</div>
<div class="t" style="right:35px;top:304.95px;font-size:14.5px;color:#1e1e1e">154 ms</div>
</div>
<svg class="a" style="left:16.00px;top:569.00px;" width="6" height="9" viewBox="0 0 6 9"><path d="M6 0 L0 4.5 L6 9 Z" fill="#8a8a90"/></svg>
<div class="a" style="left:30.00px;top:568.50px;width:313.00px;height:10.00px;background:#c2c3c9;"></div>
<svg class="a" style="left:425.00px;top:569.00px;" width="6" height="9" viewBox="0 0 6 9"><path d="M0 0 L6 4.5 L0 9 Z" fill="#8a8a90"/></svg>
<div class="a" style="left:9.00px;top:587.00px;width:449.00px;height:1.00px;background:#eeeef2;"></div>
<div class="t" style="left:21.00px;top:593.83px;font-size:16.20px;color:#303030;font-weight:bold;">Test Detail Summary</div>
<svg class="a" style="left:35.50px;top:623.50px;" width="18" height="18" viewBox="0 0 18 18"><circle cx="9" cy="9" r="8.6" fill="#339933"/><path d="M4.6 9.2 L7.8 12.6 L13.4 5" stroke="#fff" stroke-width="2.6" fill="none"/></svg>
<div class="t" style="left:63.50px;top:623.88px;font-size:15.90px;color:#303030;font-weight:normal;">StringCollectionTest</div>
<svg class="a" style="left:56.50px;top:649.00px;" width="13" height="17" viewBox="0 0 13 17"><rect x="1" y="1" width="11" height="15" fill="none" stroke="#717171" stroke-width="1.5"/><path d="M3.5 5 H9.5 M3.5 8 H9.5 M3.5 11 H9.5" stroke="#717171" stroke-width="1.5"/></svg>
<div class="t" style="left:81.00px;top:650.36px;font-size:16.00px;color:#303030;font-weight:normal;">Source:</div>
<div class="t" style="left:147.5px;top:651.00px;font-family:'Liberation Mono',monospace;font-size:14.93px;color:#1a0dab;text-decoration:underline;text-underline-offset:2px">S1002StringCollectionAssert.cs</div>
<div class="t" style="left:425.00px;top:649.86px;font-size:16.00px;color:#303030;font-weight:normal;">line</div>
<svg class="a" style="left:53.50px;top:676.00px;" width="18" height="18" viewBox="0 0 18 18"><circle cx="9" cy="9" r="7.8" fill="none" stroke="#717171" stroke-width="1.6"/><path d="M9 4 V9.5 H13" stroke="#717171" stroke-width="1.6" fill="none"/></svg>
<div class="t" style="left:82.00px;top:677.36px;font-size:16.00px;color:#303030;font-weight:normal;">Duration:</div>
<div class="t" style="left:161.5px;top:678.00px;font-family:'Liberation Mono',monospace;font-size:14.93px;color:#1e1e1e">42 ms</div>
<svg class="a" style="left:29.00px;top:934.00px;" width="6" height="9" viewBox="0 0 6 9"><path d="M6 0 L0 4.5 L6 9 Z" fill="#8a8a90"/></svg>
<div class="a" style="left:44.00px;top:933.50px;width:368.00px;height:10.00px;background:#c2c3c9;"></div>
<svg class="a" style="left:446.00px;top:934.00px;" width="6" height="9" viewBox="0 0 6 9"><path d="M0 0 L6 4.5 L0 9 Z" fill="#8a8a90"/></svg>
<div class="a" style="left:470.00px;top:129.00px;width:264.00px;height:25.50px;background:#007acc;"></div>
<div class="t" style="left:475.00px;top:136.42px;font-size:14.40px;color:#ffffff;font-weight:normal;">S1002StringCollectionAssert.cs</div>
<svg class="a" style="left:690.00px;top:137.50px;" width="10" height="10" viewBox="0 0 10 10"><path d="M2 0.7 H8 M2.8 0.7 V5.5 M7.2 0.7 V5.5 M0.5 5.5 H9.5 M5 5.5 V10" stroke="#fff" stroke-width="1.4" fill="none"/></svg>
<svg class="a" style="left:714.00px;top:137.50px;" width="12" height="10" viewBox="0 0 12 10"><path d="M1 0.5 L11 9.5 M11 0.5 L1 9.5" stroke="#fff" stroke-width="1.6"/></svg>
<svg class="a" style="left:1867.00px;top:140.50px;" width="9" height="5" viewBox="0 0 9 5"><path d="M0 0H9 L4.5 5 Z" fill="#424242"/></svg>
<div class="a" style="left:470.00px;top:154.50px;width:1409.50px;height:2.00px;background:#007acc;"></div>
<div class="a" style="left:470.00px;top:156.50px;width:1409.50px;height:25.00px;background:#ffffff;"></div>
<div class="a" style="left:470.00px;top:181.00px;width:1409.50px;height:2.00px;background:#cccedb;"></div>
<svg class="a" style="left:475.00px;top:161.00px;" width="18" height="16" viewBox="0 0 18 16"><rect x="0.75" y="0.75" width="16.5" height="14.5" fill="none" stroke="#6a9955" stroke-width="1.5"/><text x="2.5" y="12" font-family="Liberation Sans" font-size="10" font-weight="bold" fill="#333">C#</text></svg>
<div class="t" style="left:496.00px;top:163.09px;font-size:14.60px;color:#303030;font-weight:normal;">OnlineGame.NUnit</div>
<svg class="a" style="left:924.50px;top:167.25px;" width="8" height="4.5" viewBox="0 0 8 4.5"><path d="M0 0H8 L4.0 4.5 Z" fill="#424242"/></svg>
<div class="a" style="left:936.00px;top:156.50px;width:5.00px;height:25.00px;background:#dcdde3;"></div>
<svg class="a" style="left:945.00px;top:161.00px;" width="17" height="16" viewBox="0 0 17 16"><path d="M1 6 L7 1 L10.5 4.5 L6 9 Z" fill="#d7852c"/><rect x="9" y="8" width="7" height="7" fill="none" stroke="#d7852c" stroke-width="1.5"/><path d="M6 9 V12 H9" stroke="#d7852c" stroke-width="1.3" fill="none"/></svg>
<div class="t" style="left:967.00px;top:163.09px;font-size:14.55px;color:#303030;font-weight:normal;">OnlineGame.NUnit.S1002StringCollectionAssert</div>
<svg class="a" style="left:1396.50px;top:167.25px;" width="8" height="4.5" viewBox="0 0 8 4.5"><path d="M0 0H8 L4.0 4.5 Z" fill="#424242"/></svg>
<div class="a" style="left:1408.50px;top:156.50px;width:5.00px;height:25.00px;background:#dcdde3;"></div>
<svg class="a" style="left:1416.50px;top:163.50px;" width="12" height="12" viewBox="0 0 12 12"><path d="M6 0.7 L11.3 3.4 V8.8 L6 11.5 L0.7 8.8 V3.4 Z M0.7 3.4 L6 6.1 L11.3 3.4 M6 6.1 V11.5" fill="none" stroke="#8a5fb8" stroke-width="1.1"/></svg>
<div class="t" style="left:1438.50px;top:163.05px;font-size:14.85px;color:#303030;font-weight:normal;">StringCollectionTest()</div>
<svg class="a" style="left:1867.50px;top:167.25px;" width="8" height="4.5" viewBox="0 0 8 4.5"><path d="M0 0H8 L4.0 4.5 Z" fill="#424242"/></svg>
<div class="a" style="left:470.00px;top:183.00px;width:1376.50px;height:769.00px;background:#ffffff;"></div>
<div class="a" style="left:470.00px;top:183.00px;width:24.50px;height:769.00px;background:#e6e7ea;"></div>
<div class="a" style="left:469.00px;top:183.00px;width:1.00px;height:769.00px;background:#d6d7de;"></div>
<div class="a" style="left:706.60px;top:555.68px;width:993.70px;height:25.17px;background:#99c9ef;"></div>
<div class="a" style="left:602.00px;top:580.55px;width:993.70px;height:24.87px;background:#99c9ef;"></div>
<div class="a" style="left:606.00px;top:183.00px;width:1.00px;height:769.00px;background:repeating-linear-gradient(to bottom,#bcbcbc 0 5px,transparent 5px 8px);"></div>
<div class="a" style="left:648.00px;top:183.00px;width:1.00px;height:769.00px;background:repeating-linear-gradient(to bottom,#bcbcbc 0 5px,transparent 5px 8px);"></div>
<div class="a" style="left:689.00px;top:258.00px;width:1.00px;height:694.00px;background:repeating-linear-gradient(to bottom,#bcbcbc 0 5px,transparent 5px 8px);"></div>
<div class="a" style="left:576.50px;top:183.00px;width:6.00px;height:769.00px;background:#6ad46a;"></div>
<div class="a" style="left:593.00px;top:183.00px;width:2.00px;height:769.00px;background:#a8a8a8;"></div>
<div class="a" style="left:587.00px;top:213.00px;width:13.00px;height:13.00px;background:#ffffff;box-sizing:border-box;border:1px solid #a5a5a5"></div>
<div class="a" style="left:590.00px;top:219.00px;width:7.00px;height:1.20px;background:#555555;"></div>
<svg class="a" style="left:499.50px;top:212.00px;" width="14.5" height="14.5" viewBox="0 0 14.5 14.5"><circle cx="7.25" cy="7.25" r="6.4" fill="#fff" stroke="#1e1e1e" stroke-width="1.6"/><path d="M7.25 0.85 A6.4 6.4 0 0 0 7.25 13.65 Z" fill="#1e1e1e"/></svg>
<svg class="a" style="left:498.50px;top:556.00px;" width="19" height="20" viewBox="0 0 19 20"><rect x="8" y="0" width="3" height="6" fill="#1e1e1e"/><path d="M2 6 H17 L18 12 H1 Z" fill="#1e1e1e"/><path d="M1.5 13 V19 M4.5 13 V19 M7.5 13 V19 M10.5 13 V19 M13.5 13 V19 M16.5 13 V19" stroke="#1e1e1e" stroke-width="1.6"/></svg>
<svg class="a" style="left:688.00px;top:191.50px;" width="11" height="11" viewBox="0 0 11 11"><circle cx="5.5" cy="5.5" r="5.3" fill="#339933"/><path d="M2.8 5.6 L4.7 7.6 L8.3 3.3" stroke="#fff" stroke-width="1.7" fill="none"/></svg>
<div class="a" style="left:706.00px;top:188.50px;width:1.00px;height:15.00px;background:#8f8f8f;"></div>
<div class="t" style="left:713.50px;top:190.98px;font-size:13.40px;color:#8c8c8c;font-weight:normal;">0 references</div>
<div class="code" style="left:470px;width:101.5px;text-align:right;top:207.50px;color:#2b91af">78</div>
<div class="code" style="left:470px;width:101.5px;text-align:right;top:232.37px;color:#2b91af">79</div>
<div class="code" style="left:470px;width:101.5px;text-align:right;top:257.24px;color:#2b91af">80</div>
<div class="code" style="left:470px;width:101.5px;text-align:right;top:282.11px;color:#2b91af">81</div>
<div class="code" style="left:470px;width:101.5px;text-align:right;top:306.98px;color:#2b91af">82</div>
<div class="code" style="left:470px;width:101.5px;text-align:right;top:331.85px;color:#2b91af">83</div>
<div class="code" style="left:470px;width:101.5px;text-align:right;top:356.72px;color:#2b91af">84</div>
<div class="code" style="left:470px;width:101.5px;text-align:right;top:381.59px;color:#2b91af">85</div>
<div class="code" style="left:470px;width:101.5px;text-align:right;top:406.46px;color:#2b91af">86</div>
<div class="code" style="left:470px;width:101.5px;text-align:right;top:431.33px;color:#2b91af">87</div>
<div class="code" style="left:470px;width:101.5px;text-align:right;top:456.20px;color:#2b91af">88</div>
<div class="code" style="left:470px;width:101.5px;text-align:right;top:481.07px;color:#2b91af">89</div>
<div class="code" style="left:470px;width:101.5px;text-align:right;top:505.94px;color:#2b91af">90</div>
<div class="code" style="left:470px;width:101.5px;text-align:right;top:530.81px;color:#2b91af">91</div>
<div class="code" style="left:470px;width:101.5px;text-align:right;top:555.68px;color:#2b91af">92</div>
<div class="code" style="left:470px;width:101.5px;text-align:right;top:580.55px;color:#2b91af">93</div>
<div class="code" style="left:470px;width:101.5px;text-align:right;top:605.42px;color:#2b91af">94</div>
<div class="code" style="left:470px;width:101.5px;text-align:right;top:630.29px;color:#2b91af">95</div>
<div class="code" style="left:470px;width:101.5px;text-align:right;top:655.16px;color:#2b91af">96</div>
<div class="code" style="left:470px;width:101.5px;text-align:right;top:680.03px;color:#2b91af">97</div>
<div class="code" style="left:470px;width:101.5px;text-align:right;top:704.90px;color:#2b91af">98</div>
<div class="code" style="left:470px;width:101.5px;text-align:right;top:729.77px;color:#2b91af">99</div>
<div class="code" style="left:470px;width:101.5px;text-align:right;top:754.64px;color:#2b91af">100</div>
<div class="code" style="left:470px;width:101.5px;text-align:right;top:779.51px;color:#2b91af">101</div>
<div class="code" style="left:470px;width:101.5px;text-align:right;top:804.38px;color:#2b91af">102</div>
<div class="code" style="left:470px;width:101.5px;text-align:right;top:829.25px;color:#2b91af">103</div>
<div class="code" style="left:470px;width:101.5px;text-align:right;top:854.12px;color:#2b91af">104</div>
<div class="code" style="left:470px;width:101.5px;text-align:right;top:878.99px;color:#2b91af">105</div>
<div class="code" style="left:470px;width:101.5px;text-align:right;top:903.86px;color:#2b91af">106</div>
<div class="code" style="left:470px;width:101.5px;text-align:right;top:928.73px;color:#2b91af">107</div>
<div class="code" style="left:602.00px;top:207.50px"><span class="p">        </span><span class="k">public</span><span class="p"> </span><span class="k">void</span><span class="p"> </span><span class="m">StringCollectionTest</span><span class="p">()</span></div>
<div class="code" style="left:602.00px;top:232.37px"><span class="p">        {</span></div>
<div class="code" style="left:727.52px;top:257.24px"><span class="c">//1.</span></div>
<div class="code" style="left:727.52px;top:282.11px"><span class="c">//Create Int collection</span></div>
<div class="code" style="left:727.52px;top:306.98px"><span class="c">//collection1 and collection2 are in the same order</span></div>
<div class="code" style="left:727.52px;top:331.85px"><span class="c">//collection1 and collection3 are in the different order</span></div>
<div class="code" style="left:727.52px;top:356.72px"><span class="c">//collection1 does not contain collection4</span></div>
<div class="code" style="left:727.52px;top:381.59px"><span class="c">//collection1 contain collection5 in order</span></div>
<div class="code" style="left:727.52px;top:406.46px"><span class="c">//collection6ContainNull contain null value</span></div>
<div class="code" style="left:727.52px;top:431.33px"><span class="c">//collection7 is null value</span></div>
<div class="code" style="left:727.52px;top:456.20px"><span class="c">//collection8NotUnique is NOT a unique list</span></div>
<div class="code" style="left:727.52px;top:481.07px"><span class="c">//collection9Descend is a unique list with descending order.</span></div>
<div class="code" style="left:727.52px;top:505.94px"><span class="c">//collection10Empty is Empty collection</span></div>
<div class="code" style="left:727.52px;top:530.81px"><span class="c">//collection11All2 contain all the same value item.</span></div>
<div class="code" style="left:727.52px;top:555.68px"><span class="ty">List</span><span class="p">&lt;</span><span class="k">string</span><span class="p">&gt; </span><span class="v">collection1</span><span class="p"> = </span><span class="k">new</span><span class="p"> </span><span class="ty">List</span><span class="p">&lt;</span><span class="k">string</span><span class="p">&gt; { </span><span class="s">&quot;Str1&quot;</span><span class="p">, </span><span class="s">&quot;Str2&quot;</span><span class="p">, </span><span class="s">&quot;Str3&quot;</span><span class="p">, </span><span class="s">&quot;Str4&quot;</span><span class="p"> };</span><span class="p"> </span><span class="c">//1, 2, 3, 4</span></div>
<div class="code" style="left:727.52px;top:580.55px"><span class="ty">List</span><span class="p">&lt;</span><span class="k">string</span><span class="p">&gt; </span><span class="v">collection2</span><span class="p"> = </span><span class="k">new</span><span class="p"> </span><span class="ty">List</span><span class="p">&lt;</span><span class="k">string</span><span class="p">&gt; { </span><span class="s">&quot;Str1&quot;</span><span class="p">, </span><span class="s">&quot;Str2&quot;</span><span class="p">, </span><span class="s">&quot;Str3&quot;</span><span class="p">, </span><span class="s">&quot;Str4&quot;</span><span class="p"> };</span><span class="p"> </span><span class="c">//1, 2, 3, 4</span></div>
<div class="code" style="left:727.52px;top:605.42px"><span class="ty">List</span><span class="p">&lt;</span><span class="k">string</span><span class="p">&gt; </span><span class="v">collection3</span><span class="p"> = </span><span class="k">new</span><span class="p"> </span><span class="ty">List</span><span class="p">&lt;</span><span class="k">string</span><span class="p">&gt; { </span><span class="s">&quot;Str2&quot;</span><span class="p">, </span><span class="s">&quot;Str1&quot;</span><span class="p">, </span><span class="s">&quot;Str4&quot;</span><span class="p">, </span><span class="s">&quot;Str3&quot;</span><span class="p"> };</span><span class="p"> </span><span class="c">//2, 1, 4, 3</span></div>
<div class="code" style="left:727.52px;top:630.29px"><span class="ty">List</span><span class="p">&lt;</span><span class="k">string</span><span class="p">&gt; </span><span class="v">collection4</span><span class="p"> = </span><span class="k">new</span><span class="p"> </span><span class="ty">List</span><span class="p">&lt;</span><span class="k">string</span><span class="p">&gt; { </span><span class="s">&quot;StrFive&quot;</span><span class="p"> };</span><span class="p"> </span><span class="c">//5</span></div>
<div class="code" style="left:727.52px;top:655.16px"><span class="ty">List</span><span class="p">&lt;</span><span class="k">string</span><span class="p">&gt; </span><span class="v">collection5</span><span class="p"> = </span><span class="k">new</span><span class="p"> </span><span class="ty">List</span><span class="p">&lt;</span><span class="k">string</span><span class="p">&gt; { </span><span class="s">&quot;Str2&quot;</span><span class="p">, </span><span class="s">&quot;Str3&quot;</span><span class="p"> };</span><span class="p"> </span><span class="c">//2, 3</span></div>
<div class="code" style="left:727.52px;top:680.03px"><span class="ty">List</span><span class="p">&lt;</span><span class="k">string</span><span class="p">&gt; </span><span class="u">collection6ContainNull</span><span class="p"> = </span><span class="k">new</span><span class="p"> </span><span class="ty">List</span><span class="p">&lt;</span><span class="k">string</span><span class="p">&gt; { </span><span class="s">&quot;Str2&quot;</span><span class="p">, </span><span class="s">&quot;Str3&quot;</span><span class="p">, </span><span class="k">null</span><span class="p"> };</span><span class="p"> </span><span class="c">//2, 3, null</span></div>
<div class="code" style="left:727.52px;top:704.90px"><span class="ty">List</span><span class="p">&lt;</span><span class="k">string</span><span class="p">&gt; </span><span class="v">collection7NullValue</span><span class="p"> = </span><span class="k">null</span><span class="p">; </span><span class="c">//null</span></div>
<div class="code" style="left:727.52px;top:729.77px"><span class="ty">List</span><span class="p">&lt;</span><span class="k">string</span><span class="p">&gt; </span><span class="v">collection8NotUnique</span><span class="p"> = </span><span class="k">new</span><span class="p"> </span><span class="ty">List</span><span class="p">&lt;</span><span class="k">string</span><span class="p">&gt; { </span><span class="s">&quot;Str1&quot;</span><span class="p">, </span><span class="s">&quot;Str2&quot;</span><span class="p">, </span><span class="s">&quot;Str2&quot;</span><span class="p">, </span><span class="s">&quot;Str4&quot;</span><span class="p"> };</span><span class="p"> </span><span class="c">//1, 2, 2, 4</span></div>
<div class="code" style="left:727.52px;top:754.64px"><span class="ty">List</span><span class="p">&lt;</span><span class="k">string</span><span class="p">&gt; </span><span class="v">collection9Descend</span><span class="p"> = </span><span class="k">new</span><span class="p"> </span><span class="ty">List</span><span class="p">&lt;</span><span class="k">string</span><span class="p">&gt; { </span><span class="s">&quot;Str4&quot;</span><span class="p">, </span><span class="s">&quot;Str3&quot;</span><span class="p">, </span><span class="s">&quot;Str2&quot;</span><span class="p">, </span><span class="s">&quot;Str1&quot;</span><span class="p"> };</span><span class="p"> </span><span class="c">//4, 3, 2, 1</span></div>
<div class="code" style="left:727.52px;top:779.51px"><span class="ty">List</span><span class="p">&lt;</span><span class="k">string</span><span class="p">&gt; </span><span class="u">collection10Empty</span><span class="p"> = </span><span class="k">new</span><span class="p"> </span><span class="ty">List</span><span class="p">&lt;</span><span class="k">string</span><span class="p">&gt; </span><span class="u">{ }</span><span class="p">; </span><span class="c">//Empty</span></div>
<div class="code" style="left:727.52px;top:804.38px"><span class="ty">List</span><span class="p">&lt;</span><span class="k">string</span><span class="p">&gt; </span><span class="v">collection11All2</span><span class="p"> = </span><span class="k">new</span><span class="p"> </span><span class="ty">List</span><span class="p">&lt;</span><span class="k">string</span><span class="p">&gt; { </span><span class="s">&quot;Str2&quot;</span><span class="p">, </span><span class="s">&quot;Str2&quot;</span><span class="p">, </span><span class="s">&quot;Str2&quot;</span><span class="p">, </span><span class="s">&quot;Str2&quot;</span><span class="p"> };</span><span class="p"> </span><span class="c">//2, 2, 2, 2</span></div>
<div class="code" style="left:727.52px;top:829.25px"><span class="ty">List</span><span class="p">&lt;</span><span class="k">string</span><span class="p">&gt; </span><span class="v">collection12First2</span><span class="p"> = </span><span class="k">new</span><span class="p"> </span><span class="ty">List</span><span class="p">&lt;</span><span class="k">string</span><span class="p">&gt; { </span><span class="s">&quot;Str1&quot;</span><span class="p">, </span><span class="s">&quot;Str2&quot;</span><span class="p"> };</span></div>
<div class="code" style="left:727.52px;top:854.12px"><span class="ty">List</span><span class="p">&lt;</span><span class="k">string</span><span class="p">&gt; </span><span class="v">collection13Last2</span><span class="p"> = </span><span class="k">new</span><span class="p"> </span><span class="ty">List</span><span class="p">&lt;</span><span class="k">string</span><span class="p">&gt; { </span><span class="s">&quot;Str3&quot;</span><span class="p">, </span><span class="s">&quot;Str4&quot;</span><span class="p"> };</span></div>
<div class="code" style="left:727.52px;top:878.99px"><span class="c">//------------------------------------</span></div>
<div class="code" style="left:727.52px;top:903.86px"><span class="c">//2.</span></div>
<div class="code" style="left:727.52px;top:928.73px"><span class="c">//EqualCompare</span></div>
<div class="a" style="left:728.02px;top:577.18px;width:16.00px;height:1.60px;background:repeating-linear-gradient(to right,#3a8a3a 0 3px,transparent 3px 6px);"></div>
<div class="a" style="left:728.02px;top:602.05px;width:16.00px;height:1.60px;background:repeating-linear-gradient(to right,#3a8a3a 0 3px,transparent 3px 6px);"></div>
<div class="a" style="left:728.02px;top:626.92px;width:16.00px;height:1.60px;background:repeating-linear-gradient(to right,#3a8a3a 0 3px,transparent 3px 6px);"></div>
<div class="a" style="left:728.02px;top:651.79px;width:16.00px;height:1.60px;background:repeating-linear-gradient(to right,#3a8a3a 0 3px,transparent 3px 6px);"></div>
<div class="a" style="left:728.02px;top:676.66px;width:16.00px;height:1.60px;background:repeating-linear-gradient(to right,#3a8a3a 0 3px,transparent 3px 6px);"></div>
<div class="a" style="left:728.02px;top:701.53px;width:16.00px;height:1.60px;background:repeating-linear-gradient(to right,#3a8a3a 0 3px,transparent 3px 6px);"></div>
<div class="a" style="left:728.02px;top:726.40px;width:16.00px;height:1.60px;background:repeating-linear-gradient(to right,#3a8a3a 0 3px,transparent 3px 6px);"></div>
<div class="a" style="left:728.02px;top:751.27px;width:16.00px;height:1.60px;background:repeating-linear-gradient(to right,#3a8a3a 0 3px,transparent 3px 6px);"></div>
<div class="a" style="left:728.02px;top:776.14px;width:16.00px;height:1.60px;background:repeating-linear-gradient(to right,#3a8a3a 0 3px,transparent 3px 6px);"></div>
<div class="a" style="left:728.02px;top:801.01px;width:16.00px;height:1.60px;background:repeating-linear-gradient(to right,#3a8a3a 0 3px,transparent 3px 6px);"></div>
<div class="a" style="left:728.02px;top:825.88px;width:16.00px;height:1.60px;background:repeating-linear-gradient(to right,#3a8a3a 0 3px,transparent 3px 6px);"></div>
<div class="a" style="left:728.02px;top:850.75px;width:16.00px;height:1.60px;background:repeating-linear-gradient(to right,#3a8a3a 0 3px,transparent 3px 6px);"></div>
<div class="a" style="left:728.02px;top:875.62px;width:16.00px;height:1.60px;background:repeating-linear-gradient(to right,#3a8a3a 0 3px,transparent 3px 6px);"></div>
<svg class="a" style="left:863.50px;top:723.90px;" width="209" height="5" viewBox="0 0 209 5"><path d="M0 2.5 Q2.0 -0.5 4.0 2.5 Q6.0 5.5 8.0 2.5 Q10.0 -0.5 12.0 2.5 Q14.0 5.5 16.0 2.5 Q18.0 -0.5 20.0 2.5 Q22.0 5.5 24.0 2.5 Q26.0 -0.5 28.0 2.5 Q30.0 5.5 32.0 2.5 Q34.0 -0.5 36.0 2.5 Q38.0 5.5 40.0 2.5 Q42.0 -0.5 44.0 2.5 Q46.0 5.5 48.0 2.5 Q50.0 -0.5 52.0 2.5 Q54.0 5.5 56.0 2.5 Q58.0 -0.5 60.0 2.5 Q62.0 5.5 64.0 2.5 Q66.0 -0.5 68.0 2.5 Q70.0 5.5 72.0 2.5 Q74.0 -0.5 76.0 2.5 Q78.0 5.5 80.0 2.5 Q82.0 -0.5 84.0 2.5 Q86.0 5.5 88.0 2.5 Q90.0 -0.5 92.0 2.5 Q94.0 5.5 96.0 2.5 Q98.0 -0.5 100.0 2.5 Q102.0 5.5 104.0 2.5 Q106.0 -0.5 108.0 2.5 Q110.0 5.5 112.0 2.5 Q114.0 -0.5 116.0 2.5 Q118.0 5.5 120.0 2.5 Q122.0 -0.5 124.0 2.5 Q126.0 5.5 128.0 2.5 Q130.0 -0.5 132.0 2.5 Q134.0 5.5 136.0 2.5 Q138.0 -0.5 140.0 2.5 Q142.0 5.5 144.0 2.5 Q146.0 -0.5 148.0 2.5 Q150.0 5.5 152.0 2.5 Q154.0 -0.5 156.0 2.5 Q158.0 5.5 160.0 2.5 Q162.0 -0.5 164.0 2.5 Q166.0 5.5 168.0 2.5 Q170.0 -0.5 172.0 2.5 Q174.0 5.5 176.0 2.5 Q178.0 -0.5 180.0 2.5 Q182.0 5.5 184.0 2.5 Q186.0 -0.5 188.0 2.5 Q190.0 5.5 192.0 2.5 Q194.0 -0.5 196.0 2.5 Q198.0 5.5 200.0 2.5 Q202.0 -0.5 204.0 2.5 Q206.0 5.5 208.0 2.5" fill="none" stroke="#4f72a0" stroke-width="1.5"/></svg>
<div class="a" style="left:705.60px;top:555.68px;width:2.00px;height:23.87px;background:#0f1f3f;"></div>
<svg class="a" style="left:893.00px;top:701.00px;" width="11" height="18" viewBox="0 0 11 18"><path d="M2 1 H4.5 L5.5 2 L6.5 1 H9 M5.5 2 V16 M2 17 H4.5 L5.5 16 L6.5 17 H9" stroke="#000" stroke-width="1.1" fill="none"/></svg>
<div class="a" style="left:1846.50px;top:183.00px;width:33.50px;height:769.00px;background:#f5f5f5;"></div>
<svg class="a" style="left:1855.00px;top:185.50px;" width="15" height="17" viewBox="0 0 15 17"><path d="M7.5 0.5 V16.5 M4.5 3.5 L7.5 0.5 L10.5 3.5 M4.5 13.5 L7.5 16.5 L10.5 13.5" stroke="#1e1e1e" stroke-width="1.3" fill="none"/><path d="M0.5 6.8 H14.5 M0.5 10.2 H14.5" stroke="#1e1e1e" stroke-width="1.2"/></svg>
<div class="a" style="left:1846.50px;top:203.50px;width:33.50px;height:1.00px;background:#e0e0e5;"></div>
<svg class="a" style="left:1855.50px;top:206.50px;" width="14" height="13" viewBox="0 0 14 13"><path d="M7 0.5 L13.5 12.5 H0.5 Z" fill="#f6a600"/><path d="M7 4 V8.5 M7 9.8 V11" stroke="#1e1e1e" stroke-width="1.6"/></svg>
<svg class="a" style="left:1858.50px;top:230.00px;" width="9" height="5" viewBox="0 0 9 5"><path d="M0 5 L4.5 0 L9 5 Z" fill="#8a8a90"/></svg>
<div class="a" style="left:1847.50px;top:244.50px;width:5.00px;height:648.00px;background:#6ad46a;"></div>
<div class="a" style="left:1852.50px;top:250.00px;width:22.50px;height:61.50px;background:#c2c3c9;"></div>
<div class="a" style="left:1846.50px;top:272.00px;width:33.50px;height:2.00px;background:#0000e0;"></div>
<div class="a" style="left:1861.00px;top:287.50px;width:7.00px;height:6.50px;background:#107010;"></div>
<div class="a" style="left:1868.50px;top:286.00px;width:11.50px;height:2.00px;background:#f0b020;"></div>
<div class="a" style="left:1868.50px;top:290.50px;width:11.50px;height:2.00px;background:#f0b020;"></div>
<div class="a" style="left:1868.50px;top:295.50px;width:11.50px;height:2.00px;background:#f0b020;"></div>
<div class="a" style="left:1868.50px;top:460.50px;width:11.50px;height:2.20px;background:#10a010;"></div>
<div class="a" style="left:1868.50px;top:464.50px;width:11.50px;height:2.20px;background:#10a010;"></div>
<div class="a" style="left:1868.50px;top:472.50px;width:11.50px;height:2.20px;background:#10a010;"></div>
<div class="a" style="left:1868.50px;top:625.50px;width:11.50px;height:2.00px;background:#f0a030;"></div>
<div class="a" style="left:1868.50px;top:745.00px;width:11.50px;height:2.20px;background:#10a010;"></div>
<div class="a" style="left:1868.50px;top:750.00px;width:11.50px;height:2.20px;background:#10a010;"></div>
<svg class="a" style="left:1858.50px;top:937.50px;" width="9" height="5" viewBox="0 0 9 5"><path d="M0 0 L4.5 5 L9 0 Z" fill="#8a8a90"/></svg>
<div class="a" style="left:1912.50px;top:130.00px;width:7.50px;height:122.50px;background:#cccedb;"></div>
<div class="a" style="left:1912.50px;top:267.50px;width:7.50px;height:67.50px;background:#cccedb;"></div>
<div class="a" style="left:1912.50px;top:350.00px;width:7.50px;height:114.00px;background:#cccedb;"></div>
<div class="a" style="left:1912.50px;top:480.00px;width:7.50px;height:94.00px;background:#cccedb;"></div>
<div class="t" style="left:1889.5px;top:130.00px;font-size:14.5px;color:#333;transform-origin:0 0;transform:rotate(90deg) translate(0,-14.5px)">Unit Test Coverage</div>
<div class="t" style="left:1889.5px;top:267.50px;font-size:14.5px;color:#333;transform-origin:0 0;transform:rotate(90deg) translate(0,-14.5px)">Properties</div>
<div class="t" style="left:1889.5px;top:350.00px;font-size:14.5px;color:#333;transform-origin:0 0;transform:rotate(90deg) translate(0,-14.5px)">Solution Explorer</div>
<div class="t" style="left:1889.5px;top:480.00px;font-size:14.5px;color:#333;transform-origin:0 0;transform:rotate(90deg) translate(0,-14.5px)">Team Explorer</div>
<div class="a" style="left:469.50px;top:951.50px;width:1410.50px;height:22.00px;background:#f5f5f5;box-sizing:border-box;border:1px solid #cccedb;border-top:none"></div>
<div class="a" style="left:470.50px;top:953.00px;width:74.00px;height:20.00px;background:#ffffff;box-sizing:border-box;border:1px solid #cccedb"></div>
<div class="t" style="left:474.50px;top:956.74px;font-size:13.60px;color:#303030;font-weight:normal;">117 %</div>
<svg class="a" style="left:534.00px;top:960.50px;" width="7" height="4" viewBox="0 0 7 4"><path d="M0 0H7 L3.5 4 Z" fill="#717171"/></svg>
<svg class="a" style="left:578.00px;top:955.00px;" width="15" height="15" viewBox="0 0 15 15"><circle cx="7.5" cy="7.5" r="7.3" fill="#e51400"/><path d="M4.6 4.6 L10.4 10.4 M10.4 4.6 L4.6 10.4" stroke="#fff" stroke-width="2"/></svg>
<div class="t" style="left:599.00px;top:956.74px;font-size:13.60px;color:#303030;font-weight:normal;">0</div>
<svg class="a" style="left:635.50px;top:955.00px;" width="14.5" height="14.5" viewBox="0 0 14.5 14.5"><path d="M7.25 0.5 L14.2 14 H0.3 Z" fill="#f6c600"/><path d="M7.25 4.5 V9.5 M7.25 10.8 V12.3" stroke="#1e1e1e" stroke-width="1.8"/></svg>
<div class="t" style="left:656.50px;top:956.74px;font-size:13.60px;color:#303030;font-weight:normal;">1</div>
<svg class="a" style="left:705.00px;top:957.50px;" width="13" height="10" viewBox="0 0 13 10"><path d="M12.5 5 H2 M5.5 1 L1.5 5 L5.5 9" stroke="#00539c" stroke-width="2.2" fill="none"/></svg>
<svg class="a" style="left:739.50px;top:957.50px;" width="13" height="10" viewBox="0 0 13 10"><path d="M0.5 5 H11 M7.5 1 L11.5 5 L7.5 9" stroke="#00539c" stroke-width="2.2" fill="none"/></svg>
<div class="a" style="left:773.00px;top:954.00px;width:1.00px;height:18.00px;background:#cccedb;"></div>
<svg class="a" style="left:792.00px;top:955.00px;" width="15" height="14" viewBox="0 0 15 14"><path d="M4 5 L10 11 L7 14 L1 8 Z" fill="#717171"/><path d="M6 6 L13 0.5 L14.5 2 L9 9 Z" fill="#717171"/></svg>
<svg class="a" style="left:814.00px;top:960.50px;" width="7" height="4" viewBox="0 0 7 4"><path d="M0 0H7 L3.5 4 Z" fill="#1e1e1e"/></svg>
<div class="a" style="left:8.50px;top:949.00px;width:98.50px;height:24.50px;background:#f5f5f5;box-sizing:border-box;border:1px solid #cccedb;border-top:none"></div>
<div class="t" style="left:15.50px;top:954.60px;font-size:14.50px;color:#0e70c0;font-weight:normal;">Test Explorer</div>
<div class="t" style="left:113.50px;top:954.62px;font-size:14.40px;color:#303030;font-weight:normal;">Server Explorer</div>
<div class="t" style="left:228.50px;top:954.60px;font-size:14.50px;color:#303030;font-weight:normal;">Toolbox</div>
<div class="t" style="left:8.00px;top:984.42px;font-size:14.40px;color:#444444;font-weight:normal;">Package Manager Console</div>
<div class="t" style="left:196.50px;top:984.40px;font-size:14.50px;color:#444444;font-weight:normal;">Output</div>
<div class="t" style="left:258.00px;top:984.45px;font-size:14.20px;color:#444444;font-weight:normal;">Error List ...</div>
<div class="a" style="left:8.50px;top:1005.30px;width:173.50px;height:7.00px;background:#cccedb;"></div>
<div class="a" style="left:197.00px;top:1005.30px;width:46.00px;height:7.00px;background:#cccedb;"></div>
<div class="a" style="left:258.50px;top:1005.30px;width:70.50px;height:7.00px;background:#cccedb;"></div>
<div class="a" style="left:0.00px;top:1013.00px;width:1920.00px;height:26.50px;background:#007acc;"></div>
<svg class="a" style="left:5.00px;top:1021.50px;" width="20" height="14.5" viewBox="0 0 20 14.5"><path d="M4 0.8 H19 L16 13.7 H1 Z" fill="none" stroke="#fff" stroke-width="1.4"/><path d="M5 4.5 H15 M4.5 7.5 H11 M4 10.5 H14" stroke="#fff" stroke-width="1.3"/></svg>
<div class="t" style="left:35.50px;top:1020.93px;font-size:14.30px;color:#ffffff;font-weight:normal;">Ready</div>
<div class="t" style="left:827.00px;top:1020.93px;font-size:14.30px;color:#ffffff;font-weight:normal;">Ln 92</div>
<div class="t" style="left:941.00px;top:1020.93px;font-size:14.30px;color:#ffffff;font-weight:normal;">Col 11</div>
<div class="t" style="left:1055.00px;top:1020.93px;font-size:14.30px;color:#ffffff;font-weight:normal;">Ch 11</div>
<div class="t" style="left:1225.50px;top:1020.93px;font-size:14.30px;color:#ffffff;font-weight:normal;">INS</div>
<svg class="a" style="left:1318.00px;top:1020.50px;" width="10" height="14" viewBox="0 0 10 14"><path d="M5 13.5 V2 M1 5.5 L5 1.5 L9 5.5" stroke="#fff" stroke-width="2" fill="none"/></svg>
<div class="t" style="left:1340.50px;top:1020.93px;font-size:14.30px;color:#ffffff;font-weight:normal;">0</div>
<svg class="a" style="left:1377.50px;top:1020.50px;" width="14" height="14" viewBox="0 0 14 14"><path d="M1 13 L2 9.5 L10 1.5 L12.5 4 L4.5 12 Z" fill="#fff"/></svg>
<div class="t" style="left:1402.50px;top:1020.93px;font-size:14.30px;color:#ffffff;font-weight:normal;">4</div>
<svg class="a" style="left:1437.50px;top:1019.00px;" width="20" height="20" viewBox="0 0 20 20"><path d="M10 1 L19 10 L10 19 L1 10 Z" fill="#fff"/><circle cx="8" cy="8" r="1.8" fill="#007acc"/><circle cx="12" cy="12" r="1.8" fill="#007acc"/><path d="M8 8 L12 12" stroke="#007acc" stroke-width="1.4"/></svg>
<div class="t" style="left:1464.00px;top:1020.93px;font-size:14.30px;color:#ffffff;font-weight:normal;">KL01</div>
<svg class="a" style="left:1523.00px;top:1020.00px;" width="19" height="17" viewBox="0 0 19 17"><path d="M9.5 16 V9 L3 2.5 M9.5 9 L16 2.5" stroke="#fff" stroke-width="2.2" fill="none"/><circle cx="2.5" cy="2.5" r="2" fill="#fff"/><circle cx="16.5" cy="2.5" r="2" fill="#fff"/></svg>
<div class="t" style="left:1550.50px;top:1020.93px;font-size:14.30px;color:#ffffff;font-weight:normal;">KL/04B_NUnit_KL/00_Main</div>
<svg class="a" style="left:1732.00px;top:1024.50px;" width="10" height="6" viewBox="0 0 10 6"><path d="M0 6 L5 0 L10 6 Z" fill="#fff"/></svg>
<svg class="a" style="left:1775.00px;top:1019.00px;" width="15" height="16" viewBox="0 0 15 16"><path d="M7.5 1 C3.5 1 2.5 4 2.5 7 V11 L0.5 13 H14.5 L12.5 11 V7 C12.5 4 11.5 1 7.5 1 Z" fill="#d8d8e0"/><circle cx="7.5" cy="14.5" r="1.5" fill="#d8d8e0"/></svg>
<svg class="a" style="left:1785.00px;top:1026.00px;" width="14" height="14" viewBox="0 0 14 14"><circle cx="7" cy="7" r="6.5" fill="#e51400"/><text x="7" y="11" font-family="Liberation Sans" font-size="10" fill="#fff" text-anchor="middle">4</text></svg>
<svg class="a" style="left:1826.50px;top:1019.00px;" width="19" height="18" viewBox="0 0 19 18"><path d="M3 8 H14 L12 17 H1 Z" fill="none" stroke="#fff" stroke-width="1.5"/><path d="M8 12 L11 1 L14 2 L11 12 Z" fill="#f0b020"/></svg>
<svg class="a" style="left:1863.50px;top:1016.50px;" width="24" height="22" viewBox="0 0 24 22"><circle cx="11" cy="11" r="9.8" fill="#fff" stroke="#333" stroke-width="1.3"/><circle cx="18" cy="17.5" r="3.8" fill="#1e1e1e" stroke="#fff" stroke-width="1"/></svg>
<svg class="a" style="left:1891.50px;top:1016.50px;" width="25" height="22" viewBox="0 0 25 22"><circle cx="12.5" cy="11" r="10.5" fill="#339933" stroke="#fff" stroke-width="1.4"/><path d="M6.5 11.5 L10.5 15.5 L18 6.5" stroke="#fff" stroke-width="3" fill="none"/></svg>
</body></html>
